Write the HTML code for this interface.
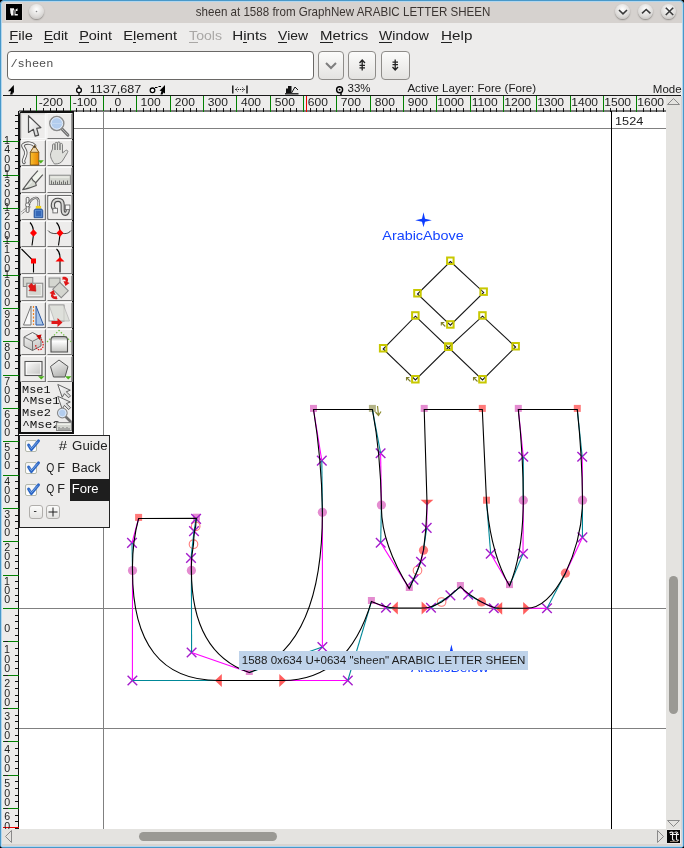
<!DOCTYPE html><html><head><meta charset="utf-8"><style>
*{margin:0;padding:0;box-sizing:border-box}
html,body{width:684px;height:848px;overflow:hidden;background:#edeceb;font-family:"Liberation Sans",sans-serif;color:#1e1e1e}
.a{position:absolute}
#frame{position:absolute;left:0;top:0;width:684px;height:848px;border:1.2px solid #4898c9;box-shadow:inset 0 0 0 1px #b2d7ef;border-radius:4px 4px 2px 2px}
#title{left:2px;top:2px;width:680px;height:21px;background:#d6d2cf}
.menu{top:27px;font-size:13px;line-height:16px;color:#202020}
.menu u{text-decoration:none;border-bottom:1px solid #202020}
.btn{border:1px solid #8e8c89;border-radius:4px;background:linear-gradient(#fbfbfa,#e4e3e1)}
.rl{font-size:10px;line-height:10px;color:#202020;position:absolute}
.wb{border-radius:50%;width:15px;height:15px;background:radial-gradient(circle at 50% 35%,#ffffff,#dcdad8 60%,#b8b6b3);box-shadow:0 1px 1.5px #8d8a87}
</style></head><body><div id="wrap" style="position:absolute;left:0;top:0;width:684px;height:848px;will-change:transform">
<div class="a" id="title"></div>
<div class="a" style="left:6px;top:4px;width:16px;height:16px;background:#000"></div>
<div class="a wb" style="left:29px;top:4px"></div>
<svg class="a" style="left:0;top:0;overflow:visible" width="684" height="848"><text x="195.81" y="15.80" font-size="12.69" textLength="294.62" lengthAdjust="spacingAndGlyphs" fill="#3a3431" font-family="'Liberation Sans',sans-serif" style="white-space:pre" >sheen at 1588 from GraphNew ARABIC LETTER SHEEN</text></svg>
<div class="a wb" style="left:615px;top:4px"></div>
<div class="a wb" style="left:638px;top:4px"></div>
<div class="a wb" style="left:661px;top:4px"></div>
<svg class="a" style="left:0;top:0;overflow:visible" width="684" height="848"><text x="9.22" y="39.60" font-size="12.41" textLength="23.68" lengthAdjust="spacingAndGlyphs" fill="#202020" font-family="'Liberation Sans',sans-serif" style="white-space:pre" >File</text></svg>
<div class="a" style="left:9.2px;top:41.5px;width:9.0px;height:1px;background:#202020"></div>
<svg class="a" style="left:0;top:0;overflow:visible" width="684" height="848"><text x="43.67" y="39.60" font-size="12.41" textLength="24.35" lengthAdjust="spacingAndGlyphs" fill="#202020" font-family="'Liberation Sans',sans-serif" style="white-space:pre" >Edit</text></svg>
<div class="a" style="left:43.7px;top:41.5px;width:9.4px;height:1px;background:#202020"></div>
<svg class="a" style="left:0;top:0;overflow:visible" width="684" height="848"><text x="79.15" y="39.60" font-size="12.41" textLength="32.89" lengthAdjust="spacingAndGlyphs" fill="#202020" font-family="'Liberation Sans',sans-serif" style="white-space:pre" >Point</text></svg>
<div class="a" style="left:79.1px;top:41.5px;width:9.6px;height:1px;background:#202020"></div>
<svg class="a" style="left:0;top:0;overflow:visible" width="684" height="848"><text x="123.22" y="39.60" font-size="12.41" textLength="53.90" lengthAdjust="spacingAndGlyphs" fill="#202020" font-family="'Liberation Sans',sans-serif" style="white-space:pre" >Element</text></svg>
<div class="a" style="left:133.0px;top:41.5px;width:3.3px;height:1px;background:#202020"></div>
<svg class="a" style="left:0;top:0;overflow:visible" width="684" height="848"><text x="189.12" y="39.60" font-size="12.41" textLength="32.87" lengthAdjust="spacingAndGlyphs" fill="#a9a7a5" font-family="'Liberation Sans',sans-serif" style="white-space:pre" >Tools</text></svg>
<div class="a" style="left:189.1px;top:41.5px;width:8.6px;height:1px;background:#a9a7a5"></div>
<svg class="a" style="left:0;top:0;overflow:visible" width="684" height="848"><text x="232.18" y="39.60" font-size="12.41" textLength="34.62" lengthAdjust="spacingAndGlyphs" fill="#202020" font-family="'Liberation Sans',sans-serif" style="white-space:pre" >Hints</text></svg>
<div class="a" style="left:243.2px;top:41.5px;width:3.4px;height:1px;background:#202020"></div>
<svg class="a" style="left:0;top:0;overflow:visible" width="684" height="848"><text x="278.13" y="39.60" font-size="12.41" textLength="29.86" lengthAdjust="spacingAndGlyphs" fill="#202020" font-family="'Liberation Sans',sans-serif" style="white-space:pre" >View</text></svg>
<div class="a" style="left:278.1px;top:41.5px;width:9.3px;height:1px;background:#202020"></div>
<svg class="a" style="left:0;top:0;overflow:visible" width="684" height="848"><text x="320.00" y="39.60" font-size="12.41" textLength="48.26" lengthAdjust="spacingAndGlyphs" fill="#202020" font-family="'Liberation Sans',sans-serif" style="white-space:pre" >Metrics</text></svg>
<div class="a" style="left:320.0px;top:41.5px;width:12.5px;height:1px;background:#202020"></div>
<svg class="a" style="left:0;top:0;overflow:visible" width="684" height="848"><text x="379.13" y="39.60" font-size="12.41" textLength="49.72" lengthAdjust="spacingAndGlyphs" fill="#202020" font-family="'Liberation Sans',sans-serif" style="white-space:pre" >Window</text></svg>
<div class="a" style="left:379.1px;top:41.5px;width:13.2px;height:1px;background:#202020"></div>
<svg class="a" style="left:0;top:0;overflow:visible" width="684" height="848"><text x="441.08" y="39.60" font-size="12.41" textLength="31.25" lengthAdjust="spacingAndGlyphs" fill="#202020" font-family="'Liberation Sans',sans-serif" style="white-space:pre" >Help</text></svg>
<div class="a" style="left:441.1px;top:41.5px;width:11.0px;height:1px;background:#202020"></div>
<div class="a" style="left:7px;top:51px;width:307px;height:29px;background:#fff;border:1px solid #6a6866;border-radius:4px"></div>
<svg class="a" style="left:0;top:0;overflow:visible" width="684" height="848"><text x="10.44" y="66.70" font-size="10.48" textLength="42.98" lengthAdjust="spacingAndGlyphs" fill="#505050" font-family="'Liberation Mono',monospace" style="white-space:pre" >/sheen</text></svg>
<div class="a btn" style="left:318px;top:51px;width:26px;height:29px"></div>
<div class="a btn" style="left:348px;top:51px;width:28px;height:29px"></div>
<div class="a btn" style="left:381px;top:51px;width:29px;height:29px"></div>
<svg class="a" style="left:0;top:0" width="684" height="848"><path d="M619 10 L623 13.8 L627 10" stroke="#3a3a3a" stroke-width="1.6" fill="none"/><path d="M642 13.3 L646.2 9.5 L650.4 13.3" stroke="#3a3a3a" stroke-width="1.6" fill="none"/><path d="M665.8 7.8 L673.2 15 M673.2 7.8 L665.8 15" stroke="#3a3a3a" stroke-width="1.6" fill="none"/><circle cx="36.5" cy="11.5" r="0.8" fill="#888"/><path d="M10 8.3 H14 V10 L13.5 10.5 V15.5 H11 V14 L10.5 13.5 Z M14.5 9.5 H15.5 V14 H17.8 V15.6 H14.5 Z M16 9.2 L17.5 8.3 V11 H16 Z" fill="#f4f4f4"/><rect x="5.5" y="3.5" width="17" height="17" fill="none" stroke="#e6e2de" stroke-width="0.6"/><path d="M326 63 L331 68 L336 63" stroke="#7e7e7e" stroke-width="2" fill="none"/><path d="M362.2 60 V70.5 M359.5 63 L362.2 60 L365 63 M359.5 65.3 H365 M359.5 67.8 H365" stroke="#222" stroke-width="1.3" fill="none"/><path d="M395.2 59.5 V70 M392.5 67 L395.2 70 L398 67 M392.5 62.2 H398 M392.5 64.7 H398" stroke="#222" stroke-width="1.3" fill="none"/><path d="M13.8 85 L8 91.3 L11 91.3 L10 94.5 L12.5 94.5 L13 92 L14 93.5 Z" fill="#000"/><path d="M79 85.5 V95" stroke="#000" stroke-width="1.2"/><circle cx="79" cy="90.2" r="2.4" fill="#fff" stroke="#000" stroke-width="1.3"/><path d="M78 85.2 L79.2 86.6" stroke="#000" stroke-width="1"/><circle cx="152.5" cy="90.3" r="2.3" fill="#fff" stroke="#000" stroke-width="1.3"/><path d="M155 87.5 H157.5 M158.5 86.5 H161" stroke="#000" stroke-width="1.1"/><path d="M165 85 L159.5 90.8 L161.5 91 L160.5 94.5 L162.5 94.5 L163.5 92.5 L165 93.5 Z" fill="#000"/><path d="M232.8 85.5 V93.5 M247 85.5 V93.5" stroke="#000" stroke-width="1.3"/><path d="M235.5 89.5 H244.5 M237.5 87.5 L235.5 89.5 L237.5 91.5 M242.5 87.5 L244.5 89.5 L242.5 91.5" stroke="#000" stroke-width="0.9" fill="none" stroke-dasharray="1.3 0.9"/><path d="M285 93.8 H298.5" stroke="#111" stroke-width="1.3"/><path d="M286 93 V88.5 H288 V86 H291.5 V93 Z" fill="#111"/><path d="M291.5 93 L295 87 L298 90" stroke="#111" stroke-width="1" fill="none"/><circle cx="339.6" cy="89.7" r="3" fill="none" stroke="#000" stroke-width="1.4"/><circle cx="339.6" cy="89.7" r="0.9" fill="#000"/><path d="M341 92.5 V96" stroke="#000" stroke-width="1.4"/></svg>
<svg class="a" style="left:0;top:0;overflow:visible" width="684" height="848"><text x="89.76" y="93.20" font-size="11.29" textLength="51.60" lengthAdjust="spacingAndGlyphs" fill="#202020" font-family="'Liberation Sans',sans-serif" style="white-space:pre" >1137,687</text></svg>
<svg class="a" style="left:0;top:0;overflow:visible" width="684" height="848"><text x="347.50" y="92.40" font-size="10.57" textLength="23.02" lengthAdjust="spacingAndGlyphs" fill="#202020" font-family="'Liberation Sans',sans-serif" style="white-space:pre" >33%</text></svg>
<svg class="a" style="left:0;top:0;overflow:visible" width="684" height="848"><text x="407.40" y="92.30" font-size="10.48" textLength="128.65" lengthAdjust="spacingAndGlyphs" fill="#202020" font-family="'Liberation Sans',sans-serif" style="white-space:pre" >Active Layer: Fore (Fore)</text></svg>
<svg class="a" style="left:0;top:0;overflow:visible" width="684" height="848"><text x="652.88" y="92.50" font-size="11.17" textLength="28.80" lengthAdjust="spacingAndGlyphs" fill="#202020" font-family="'Liberation Sans',sans-serif" style="white-space:pre" >Mode</text></svg>
<svg class="a" style="left:0;top:0" width="684" height="848" shape-rendering="crispEdges"><rect x="19" y="111" width="647" height="718" fill="#ffffff"/><rect x="2" y="96" width="664" height="15" fill="#edeceb"/><rect x="3" y="95" width="678" height="1.4" fill="#1a1a1a"/><rect x="19" y="110" width="647" height="1.6" fill="#7a7a7a"/><rect x="23" y="108" width="1.2" height="3.5" fill="#111"/><rect x="30" y="108" width="1.2" height="3.5" fill="#111"/><rect x="36" y="96" width="1.2" height="15.5" fill="#008000"/><rect x="43" y="108" width="1.2" height="3.5" fill="#111"/><rect x="50" y="108" width="1.2" height="3.5" fill="#111"/><rect x="56" y="108" width="1.2" height="3.5" fill="#111"/><rect x="63" y="108" width="1.2" height="3.5" fill="#111"/><rect x="70" y="96" width="1.2" height="15.5" fill="#008000"/><rect x="76" y="108" width="1.2" height="3.5" fill="#111"/><rect x="83" y="108" width="1.2" height="3.5" fill="#111"/><rect x="90" y="108" width="1.2" height="3.5" fill="#111"/><rect x="96" y="108" width="1.2" height="3.5" fill="#111"/><rect x="103" y="96" width="1.2" height="15.5" fill="#008000"/><rect x="110" y="108" width="1.2" height="3.5" fill="#111"/><rect x="116" y="108" width="1.2" height="3.5" fill="#111"/><rect x="123" y="108" width="1.2" height="3.5" fill="#111"/><rect x="130" y="108" width="1.2" height="3.5" fill="#111"/><rect x="136" y="96" width="1.2" height="15.5" fill="#008000"/><rect x="143" y="108" width="1.2" height="3.5" fill="#111"/><rect x="150" y="108" width="1.2" height="3.5" fill="#111"/><rect x="156" y="108" width="1.2" height="3.5" fill="#111"/><rect x="163" y="108" width="1.2" height="3.5" fill="#111"/><rect x="170" y="96" width="1.2" height="15.5" fill="#008000"/><rect x="176" y="108" width="1.2" height="3.5" fill="#111"/><rect x="183" y="108" width="1.2" height="3.5" fill="#111"/><rect x="190" y="108" width="1.2" height="3.5" fill="#111"/><rect x="196" y="108" width="1.2" height="3.5" fill="#111"/><rect x="203" y="96" width="1.2" height="15.5" fill="#008000"/><rect x="210" y="108" width="1.2" height="3.5" fill="#111"/><rect x="216" y="108" width="1.2" height="3.5" fill="#111"/><rect x="223" y="108" width="1.2" height="3.5" fill="#111"/><rect x="230" y="108" width="1.2" height="3.5" fill="#111"/><rect x="236" y="96" width="1.2" height="15.5" fill="#008000"/><rect x="243" y="108" width="1.2" height="3.5" fill="#111"/><rect x="250" y="108" width="1.2" height="3.5" fill="#111"/><rect x="256" y="108" width="1.2" height="3.5" fill="#111"/><rect x="263" y="108" width="1.2" height="3.5" fill="#111"/><rect x="270" y="96" width="1.2" height="15.5" fill="#008000"/><rect x="276" y="108" width="1.2" height="3.5" fill="#111"/><rect x="283" y="108" width="1.2" height="3.5" fill="#111"/><rect x="290" y="108" width="1.2" height="3.5" fill="#111"/><rect x="296" y="108" width="1.2" height="3.5" fill="#111"/><rect x="303" y="96" width="1.2" height="15.5" fill="#008000"/><rect x="310" y="108" width="1.2" height="3.5" fill="#111"/><rect x="316" y="108" width="1.2" height="3.5" fill="#111"/><rect x="323" y="108" width="1.2" height="3.5" fill="#111"/><rect x="330" y="108" width="1.2" height="3.5" fill="#111"/><rect x="336" y="96" width="1.2" height="15.5" fill="#008000"/><rect x="343" y="108" width="1.2" height="3.5" fill="#111"/><rect x="350" y="108" width="1.2" height="3.5" fill="#111"/><rect x="356" y="108" width="1.2" height="3.5" fill="#111"/><rect x="363" y="108" width="1.2" height="3.5" fill="#111"/><rect x="370" y="96" width="1.2" height="15.5" fill="#008000"/><rect x="376" y="108" width="1.2" height="3.5" fill="#111"/><rect x="383" y="108" width="1.2" height="3.5" fill="#111"/><rect x="390" y="108" width="1.2" height="3.5" fill="#111"/><rect x="396" y="108" width="1.2" height="3.5" fill="#111"/><rect x="403" y="96" width="1.2" height="15.5" fill="#008000"/><rect x="410" y="108" width="1.2" height="3.5" fill="#111"/><rect x="416" y="108" width="1.2" height="3.5" fill="#111"/><rect x="423" y="108" width="1.2" height="3.5" fill="#111"/><rect x="430" y="108" width="1.2" height="3.5" fill="#111"/><rect x="436" y="96" width="1.2" height="15.5" fill="#008000"/><rect x="443" y="108" width="1.2" height="3.5" fill="#111"/><rect x="450" y="108" width="1.2" height="3.5" fill="#111"/><rect x="456" y="108" width="1.2" height="3.5" fill="#111"/><rect x="463" y="108" width="1.2" height="3.5" fill="#111"/><rect x="470" y="96" width="1.2" height="15.5" fill="#008000"/><rect x="476" y="108" width="1.2" height="3.5" fill="#111"/><rect x="483" y="108" width="1.2" height="3.5" fill="#111"/><rect x="490" y="108" width="1.2" height="3.5" fill="#111"/><rect x="496" y="108" width="1.2" height="3.5" fill="#111"/><rect x="503" y="96" width="1.2" height="15.5" fill="#008000"/><rect x="510" y="108" width="1.2" height="3.5" fill="#111"/><rect x="516" y="108" width="1.2" height="3.5" fill="#111"/><rect x="523" y="108" width="1.2" height="3.5" fill="#111"/><rect x="530" y="108" width="1.2" height="3.5" fill="#111"/><rect x="536" y="96" width="1.2" height="15.5" fill="#008000"/><rect x="543" y="108" width="1.2" height="3.5" fill="#111"/><rect x="550" y="108" width="1.2" height="3.5" fill="#111"/><rect x="556" y="108" width="1.2" height="3.5" fill="#111"/><rect x="563" y="108" width="1.2" height="3.5" fill="#111"/><rect x="570" y="96" width="1.2" height="15.5" fill="#008000"/><rect x="576" y="108" width="1.2" height="3.5" fill="#111"/><rect x="583" y="108" width="1.2" height="3.5" fill="#111"/><rect x="590" y="108" width="1.2" height="3.5" fill="#111"/><rect x="596" y="108" width="1.2" height="3.5" fill="#111"/><rect x="603" y="96" width="1.2" height="15.5" fill="#008000"/><rect x="610" y="108" width="1.2" height="3.5" fill="#111"/><rect x="616" y="108" width="1.2" height="3.5" fill="#111"/><rect x="623" y="108" width="1.2" height="3.5" fill="#111"/><rect x="630" y="108" width="1.2" height="3.5" fill="#111"/><rect x="636" y="96" width="1.2" height="15.5" fill="#008000"/><rect x="643" y="108" width="1.2" height="3.5" fill="#111"/><rect x="650" y="108" width="1.2" height="3.5" fill="#111"/><rect x="656" y="108" width="1.2" height="3.5" fill="#111"/><rect x="663" y="108" width="1.2" height="3.5" fill="#111"/><rect x="306" y="96" width="1.2" height="15.5" fill="#f00000"/></svg>
<svg class="a" style="left:0;top:0;overflow:visible" width="684" height="848"><text x="38.80" y="105.70" font-size="10.34" textLength="24.10" lengthAdjust="spacingAndGlyphs" fill="#1e1e1e" font-family="'Liberation Sans',sans-serif" style="white-space:pre" >-200</text></svg>
<svg class="a" style="left:0;top:0;overflow:visible" width="684" height="848"><text x="72.80" y="105.70" font-size="10.34" textLength="24.10" lengthAdjust="spacingAndGlyphs" fill="#1e1e1e" font-family="'Liberation Sans',sans-serif" style="white-space:pre" >-100</text></svg>
<svg class="a" style="left:0;top:0;overflow:visible" width="684" height="848"><text x="114.53" y="105.70" font-size="10.34" textLength="6.70" lengthAdjust="spacingAndGlyphs" fill="#1e1e1e" font-family="'Liberation Sans',sans-serif" style="white-space:pre" >0</text></svg>
<svg class="a" style="left:0;top:0;overflow:visible" width="684" height="848"><text x="140.64" y="105.70" font-size="10.34" textLength="20.09" lengthAdjust="spacingAndGlyphs" fill="#1e1e1e" font-family="'Liberation Sans',sans-serif" style="white-space:pre" >100</text></svg>
<svg class="a" style="left:0;top:0;overflow:visible" width="684" height="848"><text x="174.79" y="105.70" font-size="10.34" textLength="20.09" lengthAdjust="spacingAndGlyphs" fill="#1e1e1e" font-family="'Liberation Sans',sans-serif" style="white-space:pre" >200</text></svg>
<svg class="a" style="left:0;top:0;overflow:visible" width="684" height="848"><text x="207.88" y="105.70" font-size="10.34" textLength="20.09" lengthAdjust="spacingAndGlyphs" fill="#1e1e1e" font-family="'Liberation Sans',sans-serif" style="white-space:pre" >300</text></svg>
<svg class="a" style="left:0;top:0;overflow:visible" width="684" height="848"><text x="240.97" y="105.70" font-size="10.34" textLength="20.09" lengthAdjust="spacingAndGlyphs" fill="#1e1e1e" font-family="'Liberation Sans',sans-serif" style="white-space:pre" >400</text></svg>
<svg class="a" style="left:0;top:0;overflow:visible" width="684" height="848"><text x="274.85" y="105.70" font-size="10.34" textLength="20.09" lengthAdjust="spacingAndGlyphs" fill="#1e1e1e" font-family="'Liberation Sans',sans-serif" style="white-space:pre" >500</text></svg>
<svg class="a" style="left:0;top:0;overflow:visible" width="684" height="848"><text x="307.79" y="105.70" font-size="10.34" textLength="20.09" lengthAdjust="spacingAndGlyphs" fill="#1e1e1e" font-family="'Liberation Sans',sans-serif" style="white-space:pre" >600</text></svg>
<svg class="a" style="left:0;top:0;overflow:visible" width="684" height="848"><text x="340.79" y="105.70" font-size="10.34" textLength="20.09" lengthAdjust="spacingAndGlyphs" fill="#1e1e1e" font-family="'Liberation Sans',sans-serif" style="white-space:pre" >700</text></svg>
<svg class="a" style="left:0;top:0;overflow:visible" width="684" height="848"><text x="374.85" y="105.70" font-size="10.34" textLength="20.09" lengthAdjust="spacingAndGlyphs" fill="#1e1e1e" font-family="'Liberation Sans',sans-serif" style="white-space:pre" >800</text></svg>
<svg class="a" style="left:0;top:0;overflow:visible" width="684" height="848"><text x="407.82" y="105.70" font-size="10.34" textLength="20.09" lengthAdjust="spacingAndGlyphs" fill="#1e1e1e" font-family="'Liberation Sans',sans-serif" style="white-space:pre" >900</text></svg>
<svg class="a" style="left:0;top:0;overflow:visible" width="684" height="848"><text x="437.26" y="105.70" font-size="10.34" textLength="26.79" lengthAdjust="spacingAndGlyphs" fill="#1e1e1e" font-family="'Liberation Sans',sans-serif" style="white-space:pre" >1000</text></svg>
<svg class="a" style="left:0;top:0;overflow:visible" width="684" height="848"><text x="471.72" y="105.70" font-size="10.34" textLength="25.89" lengthAdjust="spacingAndGlyphs" fill="#1e1e1e" font-family="'Liberation Sans',sans-serif" style="white-space:pre" >1100</text></svg>
<svg class="a" style="left:0;top:0;overflow:visible" width="684" height="848"><text x="504.26" y="105.70" font-size="10.34" textLength="26.79" lengthAdjust="spacingAndGlyphs" fill="#1e1e1e" font-family="'Liberation Sans',sans-serif" style="white-space:pre" >1200</text></svg>
<svg class="a" style="left:0;top:0;overflow:visible" width="684" height="848"><text x="537.26" y="105.70" font-size="10.34" textLength="26.79" lengthAdjust="spacingAndGlyphs" fill="#1e1e1e" font-family="'Liberation Sans',sans-serif" style="white-space:pre" >1300</text></svg>
<svg class="a" style="left:0;top:0;overflow:visible" width="684" height="848"><text x="571.26" y="105.70" font-size="10.34" textLength="26.79" lengthAdjust="spacingAndGlyphs" fill="#1e1e1e" font-family="'Liberation Sans',sans-serif" style="white-space:pre" >1400</text></svg>
<svg class="a" style="left:0;top:0;overflow:visible" width="684" height="848"><text x="604.26" y="105.70" font-size="10.34" textLength="26.79" lengthAdjust="spacingAndGlyphs" fill="#1e1e1e" font-family="'Liberation Sans',sans-serif" style="white-space:pre" >1500</text></svg>
<svg class="a" style="left:0;top:0;overflow:visible" width="684" height="848"><text x="637.26" y="105.70" font-size="10.34" textLength="26.79" lengthAdjust="spacingAndGlyphs" fill="#1e1e1e" font-family="'Liberation Sans',sans-serif" style="white-space:pre" >1600</text></svg>
<div class="a" style="left:2px;top:111px;width:17.4px;height:718px;background:#edeceb;border-right:1.3px solid #111"></div>
<svg class="a" style="left:0;top:0" width="684" height="848" shape-rendering="crispEdges"><rect x="15" y="828" width="3.5" height="1.2" fill="#111"/><rect x="15" y="821" width="3.5" height="1.2" fill="#111"/><rect x="15" y="815" width="3.5" height="1.2" fill="#111"/><rect x="3" y="808" width="16" height="1.2" fill="#008000"/><rect x="15" y="801" width="3.5" height="1.2" fill="#111"/><rect x="15" y="795" width="3.5" height="1.2" fill="#111"/><rect x="15" y="788" width="3.5" height="1.2" fill="#111"/><rect x="15" y="781" width="3.5" height="1.2" fill="#111"/><rect x="3" y="775" width="16" height="1.2" fill="#008000"/><rect x="15" y="768" width="3.5" height="1.2" fill="#111"/><rect x="15" y="761" width="3.5" height="1.2" fill="#111"/><rect x="15" y="755" width="3.5" height="1.2" fill="#111"/><rect x="15" y="748" width="3.5" height="1.2" fill="#111"/><rect x="3" y="741" width="16" height="1.2" fill="#008000"/><rect x="15" y="735" width="3.5" height="1.2" fill="#111"/><rect x="15" y="728" width="3.5" height="1.2" fill="#111"/><rect x="15" y="721" width="3.5" height="1.2" fill="#111"/><rect x="15" y="715" width="3.5" height="1.2" fill="#111"/><rect x="3" y="708" width="16" height="1.2" fill="#008000"/><rect x="15" y="701" width="3.5" height="1.2" fill="#111"/><rect x="15" y="695" width="3.5" height="1.2" fill="#111"/><rect x="15" y="688" width="3.5" height="1.2" fill="#111"/><rect x="15" y="681" width="3.5" height="1.2" fill="#111"/><rect x="3" y="675" width="16" height="1.2" fill="#008000"/><rect x="15" y="668" width="3.5" height="1.2" fill="#111"/><rect x="15" y="661" width="3.5" height="1.2" fill="#111"/><rect x="15" y="655" width="3.5" height="1.2" fill="#111"/><rect x="15" y="648" width="3.5" height="1.2" fill="#111"/><rect x="3" y="641" width="16" height="1.2" fill="#008000"/><rect x="15" y="635" width="3.5" height="1.2" fill="#111"/><rect x="15" y="628" width="3.5" height="1.2" fill="#111"/><rect x="15" y="621" width="3.5" height="1.2" fill="#111"/><rect x="15" y="615" width="3.5" height="1.2" fill="#111"/><rect x="3" y="608" width="16" height="1.2" fill="#008000"/><rect x="15" y="601" width="3.5" height="1.2" fill="#111"/><rect x="15" y="595" width="3.5" height="1.2" fill="#111"/><rect x="15" y="588" width="3.5" height="1.2" fill="#111"/><rect x="15" y="581" width="3.5" height="1.2" fill="#111"/><rect x="3" y="575" width="16" height="1.2" fill="#008000"/><rect x="15" y="568" width="3.5" height="1.2" fill="#111"/><rect x="15" y="561" width="3.5" height="1.2" fill="#111"/><rect x="15" y="555" width="3.5" height="1.2" fill="#111"/><rect x="15" y="548" width="3.5" height="1.2" fill="#111"/><rect x="3" y="541" width="16" height="1.2" fill="#008000"/><rect x="15" y="535" width="3.5" height="1.2" fill="#111"/><rect x="15" y="528" width="3.5" height="1.2" fill="#111"/><rect x="15" y="521" width="3.5" height="1.2" fill="#111"/><rect x="15" y="515" width="3.5" height="1.2" fill="#111"/><rect x="3" y="508" width="16" height="1.2" fill="#008000"/><rect x="15" y="501" width="3.5" height="1.2" fill="#111"/><rect x="15" y="495" width="3.5" height="1.2" fill="#111"/><rect x="15" y="488" width="3.5" height="1.2" fill="#111"/><rect x="15" y="481" width="3.5" height="1.2" fill="#111"/><rect x="3" y="475" width="16" height="1.2" fill="#008000"/><rect x="15" y="468" width="3.5" height="1.2" fill="#111"/><rect x="15" y="461" width="3.5" height="1.2" fill="#111"/><rect x="15" y="455" width="3.5" height="1.2" fill="#111"/><rect x="15" y="448" width="3.5" height="1.2" fill="#111"/><rect x="3" y="441" width="16" height="1.2" fill="#008000"/><rect x="15" y="435" width="3.5" height="1.2" fill="#111"/><rect x="15" y="428" width="3.5" height="1.2" fill="#111"/><rect x="15" y="421" width="3.5" height="1.2" fill="#111"/><rect x="15" y="415" width="3.5" height="1.2" fill="#111"/><rect x="3" y="408" width="16" height="1.2" fill="#008000"/><rect x="15" y="401" width="3.5" height="1.2" fill="#111"/><rect x="15" y="395" width="3.5" height="1.2" fill="#111"/><rect x="15" y="388" width="3.5" height="1.2" fill="#111"/><rect x="15" y="381" width="3.5" height="1.2" fill="#111"/><rect x="3" y="375" width="16" height="1.2" fill="#008000"/><rect x="15" y="368" width="3.5" height="1.2" fill="#111"/><rect x="15" y="361" width="3.5" height="1.2" fill="#111"/><rect x="15" y="355" width="3.5" height="1.2" fill="#111"/><rect x="15" y="348" width="3.5" height="1.2" fill="#111"/><rect x="3" y="341" width="16" height="1.2" fill="#008000"/><rect x="15" y="335" width="3.5" height="1.2" fill="#111"/><rect x="15" y="328" width="3.5" height="1.2" fill="#111"/><rect x="15" y="321" width="3.5" height="1.2" fill="#111"/><rect x="15" y="315" width="3.5" height="1.2" fill="#111"/><rect x="3" y="308" width="16" height="1.2" fill="#008000"/><rect x="15" y="301" width="3.5" height="1.2" fill="#111"/><rect x="15" y="295" width="3.5" height="1.2" fill="#111"/><rect x="15" y="288" width="3.5" height="1.2" fill="#111"/><rect x="15" y="281" width="3.5" height="1.2" fill="#111"/><rect x="3" y="275" width="16" height="1.2" fill="#008000"/><rect x="15" y="268" width="3.5" height="1.2" fill="#111"/><rect x="15" y="261" width="3.5" height="1.2" fill="#111"/><rect x="15" y="255" width="3.5" height="1.2" fill="#111"/><rect x="15" y="248" width="3.5" height="1.2" fill="#111"/><rect x="3" y="241" width="16" height="1.2" fill="#008000"/><rect x="15" y="235" width="3.5" height="1.2" fill="#111"/><rect x="15" y="228" width="3.5" height="1.2" fill="#111"/><rect x="15" y="221" width="3.5" height="1.2" fill="#111"/><rect x="15" y="215" width="3.5" height="1.2" fill="#111"/><rect x="3" y="208" width="16" height="1.2" fill="#008000"/><rect x="15" y="201" width="3.5" height="1.2" fill="#111"/><rect x="15" y="195" width="3.5" height="1.2" fill="#111"/><rect x="15" y="188" width="3.5" height="1.2" fill="#111"/><rect x="15" y="181" width="3.5" height="1.2" fill="#111"/><rect x="3" y="175" width="16" height="1.2" fill="#008000"/><rect x="15" y="168" width="3.5" height="1.2" fill="#111"/><rect x="15" y="161" width="3.5" height="1.2" fill="#111"/><rect x="15" y="155" width="3.5" height="1.2" fill="#111"/><rect x="15" y="148" width="3.5" height="1.2" fill="#111"/><rect x="3" y="141" width="16" height="1.2" fill="#008000"/><rect x="15" y="135" width="3.5" height="1.2" fill="#111"/><rect x="15" y="128" width="3.5" height="1.2" fill="#111"/><rect x="15" y="121" width="3.5" height="1.2" fill="#111"/><rect x="15" y="115" width="3.5" height="1.2" fill="#111"/><rect x="3" y="827" width="16" height="1.2" fill="#f00000"/></svg>
<div class="a" style="left:0;top:111px;width:19px;height:718px;overflow:hidden"><div class="a" style="left:3.5px;top:696.5px;width:4.8px;height:1.3px;background:#1e1e1e"></div><svg class="a" style="left:0;top:-111px;overflow:visible" width="684" height="848"><text x="4.19" y="820.40" font-size="10.57" textLength="5.92" lengthAdjust="spacingAndGlyphs" fill="#1e1e1e" font-family="'Liberation Sans',sans-serif" style="white-space:pre" >6</text></svg><svg class="a" style="left:0;top:-111px;overflow:visible" width="684" height="848"><text x="4.22" y="829.50" font-size="10.57" textLength="5.92" lengthAdjust="spacingAndGlyphs" fill="#1e1e1e" font-family="'Liberation Sans',sans-serif" style="white-space:pre" >0</text></svg><div class="a" style="left:3.5px;top:663.5px;width:4.8px;height:1.3px;background:#1e1e1e"></div><svg class="a" style="left:0;top:-111px;overflow:visible" width="684" height="848"><text x="4.25" y="787.40" font-size="10.72" textLength="5.92" lengthAdjust="spacingAndGlyphs" fill="#1e1e1e" font-family="'Liberation Sans',sans-serif" style="white-space:pre" >5</text></svg><svg class="a" style="left:0;top:-111px;overflow:visible" width="684" height="848"><text x="4.22" y="796.50" font-size="10.57" textLength="5.92" lengthAdjust="spacingAndGlyphs" fill="#1e1e1e" font-family="'Liberation Sans',sans-serif" style="white-space:pre" >0</text></svg><svg class="a" style="left:0;top:-111px;overflow:visible" width="684" height="848"><text x="4.22" y="805.60" font-size="10.57" textLength="5.92" lengthAdjust="spacingAndGlyphs" fill="#1e1e1e" font-family="'Liberation Sans',sans-serif" style="white-space:pre" >0</text></svg><div class="a" style="left:3.5px;top:629.5px;width:4.8px;height:1.3px;background:#1e1e1e"></div><svg class="a" style="left:0;top:-111px;overflow:visible" width="684" height="848"><text x="4.27" y="753.40" font-size="10.72" textLength="5.92" lengthAdjust="spacingAndGlyphs" fill="#1e1e1e" font-family="'Liberation Sans',sans-serif" style="white-space:pre" >4</text></svg><svg class="a" style="left:0;top:-111px;overflow:visible" width="684" height="848"><text x="4.22" y="762.50" font-size="10.57" textLength="5.92" lengthAdjust="spacingAndGlyphs" fill="#1e1e1e" font-family="'Liberation Sans',sans-serif" style="white-space:pre" >0</text></svg><svg class="a" style="left:0;top:-111px;overflow:visible" width="684" height="848"><text x="4.22" y="771.60" font-size="10.57" textLength="5.92" lengthAdjust="spacingAndGlyphs" fill="#1e1e1e" font-family="'Liberation Sans',sans-serif" style="white-space:pre" >0</text></svg><div class="a" style="left:3.5px;top:596.5px;width:4.8px;height:1.3px;background:#1e1e1e"></div><svg class="a" style="left:0;top:-111px;overflow:visible" width="684" height="848"><text x="4.27" y="720.40" font-size="10.57" textLength="5.92" lengthAdjust="spacingAndGlyphs" fill="#1e1e1e" font-family="'Liberation Sans',sans-serif" style="white-space:pre" >3</text></svg><svg class="a" style="left:0;top:-111px;overflow:visible" width="684" height="848"><text x="4.22" y="729.50" font-size="10.57" textLength="5.92" lengthAdjust="spacingAndGlyphs" fill="#1e1e1e" font-family="'Liberation Sans',sans-serif" style="white-space:pre" >0</text></svg><svg class="a" style="left:0;top:-111px;overflow:visible" width="684" height="848"><text x="4.22" y="738.60" font-size="10.57" textLength="5.92" lengthAdjust="spacingAndGlyphs" fill="#1e1e1e" font-family="'Liberation Sans',sans-serif" style="white-space:pre" >0</text></svg><div class="a" style="left:3.5px;top:563.5px;width:4.8px;height:1.3px;background:#1e1e1e"></div><svg class="a" style="left:0;top:-111px;overflow:visible" width="684" height="848"><text x="4.25" y="687.40" font-size="10.57" textLength="5.92" lengthAdjust="spacingAndGlyphs" fill="#1e1e1e" font-family="'Liberation Sans',sans-serif" style="white-space:pre" >2</text></svg><svg class="a" style="left:0;top:-111px;overflow:visible" width="684" height="848"><text x="4.22" y="696.50" font-size="10.57" textLength="5.92" lengthAdjust="spacingAndGlyphs" fill="#1e1e1e" font-family="'Liberation Sans',sans-serif" style="white-space:pre" >0</text></svg><svg class="a" style="left:0;top:-111px;overflow:visible" width="684" height="848"><text x="4.22" y="705.60" font-size="10.57" textLength="5.92" lengthAdjust="spacingAndGlyphs" fill="#1e1e1e" font-family="'Liberation Sans',sans-serif" style="white-space:pre" >0</text></svg><div class="a" style="left:3.5px;top:529.5px;width:4.8px;height:1.3px;background:#1e1e1e"></div><svg class="a" style="left:0;top:-111px;overflow:visible" width="684" height="848"><text x="4.09" y="653.40" font-size="10.72" textLength="5.92" lengthAdjust="spacingAndGlyphs" fill="#1e1e1e" font-family="'Liberation Sans',sans-serif" style="white-space:pre" >1</text></svg><svg class="a" style="left:0;top:-111px;overflow:visible" width="684" height="848"><text x="4.22" y="662.50" font-size="10.57" textLength="5.92" lengthAdjust="spacingAndGlyphs" fill="#1e1e1e" font-family="'Liberation Sans',sans-serif" style="white-space:pre" >0</text></svg><svg class="a" style="left:0;top:-111px;overflow:visible" width="684" height="848"><text x="4.22" y="671.60" font-size="10.57" textLength="5.92" lengthAdjust="spacingAndGlyphs" fill="#1e1e1e" font-family="'Liberation Sans',sans-serif" style="white-space:pre" >0</text></svg><svg class="a" style="left:0;top:-111px;overflow:visible" width="684" height="848"><text x="4.22" y="631.70" font-size="10.57" textLength="5.92" lengthAdjust="spacingAndGlyphs" fill="#1e1e1e" font-family="'Liberation Sans',sans-serif" style="white-space:pre" >0</text></svg><svg class="a" style="left:0;top:-111px;overflow:visible" width="684" height="848"><text x="4.09" y="585.10" font-size="10.72" textLength="5.92" lengthAdjust="spacingAndGlyphs" fill="#1e1e1e" font-family="'Liberation Sans',sans-serif" style="white-space:pre" >1</text></svg><svg class="a" style="left:0;top:-111px;overflow:visible" width="684" height="848"><text x="4.22" y="594.20" font-size="10.57" textLength="5.92" lengthAdjust="spacingAndGlyphs" fill="#1e1e1e" font-family="'Liberation Sans',sans-serif" style="white-space:pre" >0</text></svg><svg class="a" style="left:0;top:-111px;overflow:visible" width="684" height="848"><text x="4.22" y="603.30" font-size="10.57" textLength="5.92" lengthAdjust="spacingAndGlyphs" fill="#1e1e1e" font-family="'Liberation Sans',sans-serif" style="white-space:pre" >0</text></svg><svg class="a" style="left:0;top:-111px;overflow:visible" width="684" height="848"><text x="4.25" y="551.10" font-size="10.57" textLength="5.92" lengthAdjust="spacingAndGlyphs" fill="#1e1e1e" font-family="'Liberation Sans',sans-serif" style="white-space:pre" >2</text></svg><svg class="a" style="left:0;top:-111px;overflow:visible" width="684" height="848"><text x="4.22" y="560.20" font-size="10.57" textLength="5.92" lengthAdjust="spacingAndGlyphs" fill="#1e1e1e" font-family="'Liberation Sans',sans-serif" style="white-space:pre" >0</text></svg><svg class="a" style="left:0;top:-111px;overflow:visible" width="684" height="848"><text x="4.22" y="569.30" font-size="10.57" textLength="5.92" lengthAdjust="spacingAndGlyphs" fill="#1e1e1e" font-family="'Liberation Sans',sans-serif" style="white-space:pre" >0</text></svg><svg class="a" style="left:0;top:-111px;overflow:visible" width="684" height="848"><text x="4.27" y="518.10" font-size="10.57" textLength="5.92" lengthAdjust="spacingAndGlyphs" fill="#1e1e1e" font-family="'Liberation Sans',sans-serif" style="white-space:pre" >3</text></svg><svg class="a" style="left:0;top:-111px;overflow:visible" width="684" height="848"><text x="4.22" y="527.20" font-size="10.57" textLength="5.92" lengthAdjust="spacingAndGlyphs" fill="#1e1e1e" font-family="'Liberation Sans',sans-serif" style="white-space:pre" >0</text></svg><svg class="a" style="left:0;top:-111px;overflow:visible" width="684" height="848"><text x="4.22" y="536.30" font-size="10.57" textLength="5.92" lengthAdjust="spacingAndGlyphs" fill="#1e1e1e" font-family="'Liberation Sans',sans-serif" style="white-space:pre" >0</text></svg><svg class="a" style="left:0;top:-111px;overflow:visible" width="684" height="848"><text x="4.27" y="485.10" font-size="10.72" textLength="5.92" lengthAdjust="spacingAndGlyphs" fill="#1e1e1e" font-family="'Liberation Sans',sans-serif" style="white-space:pre" >4</text></svg><svg class="a" style="left:0;top:-111px;overflow:visible" width="684" height="848"><text x="4.22" y="494.20" font-size="10.57" textLength="5.92" lengthAdjust="spacingAndGlyphs" fill="#1e1e1e" font-family="'Liberation Sans',sans-serif" style="white-space:pre" >0</text></svg><svg class="a" style="left:0;top:-111px;overflow:visible" width="684" height="848"><text x="4.22" y="503.30" font-size="10.57" textLength="5.92" lengthAdjust="spacingAndGlyphs" fill="#1e1e1e" font-family="'Liberation Sans',sans-serif" style="white-space:pre" >0</text></svg><svg class="a" style="left:0;top:-111px;overflow:visible" width="684" height="848"><text x="4.25" y="451.10" font-size="10.72" textLength="5.92" lengthAdjust="spacingAndGlyphs" fill="#1e1e1e" font-family="'Liberation Sans',sans-serif" style="white-space:pre" >5</text></svg><svg class="a" style="left:0;top:-111px;overflow:visible" width="684" height="848"><text x="4.22" y="460.20" font-size="10.57" textLength="5.92" lengthAdjust="spacingAndGlyphs" fill="#1e1e1e" font-family="'Liberation Sans',sans-serif" style="white-space:pre" >0</text></svg><svg class="a" style="left:0;top:-111px;overflow:visible" width="684" height="848"><text x="4.22" y="469.30" font-size="10.57" textLength="5.92" lengthAdjust="spacingAndGlyphs" fill="#1e1e1e" font-family="'Liberation Sans',sans-serif" style="white-space:pre" >0</text></svg><svg class="a" style="left:0;top:-111px;overflow:visible" width="684" height="848"><text x="4.19" y="418.10" font-size="10.57" textLength="5.92" lengthAdjust="spacingAndGlyphs" fill="#1e1e1e" font-family="'Liberation Sans',sans-serif" style="white-space:pre" >6</text></svg><svg class="a" style="left:0;top:-111px;overflow:visible" width="684" height="848"><text x="4.22" y="427.20" font-size="10.57" textLength="5.92" lengthAdjust="spacingAndGlyphs" fill="#1e1e1e" font-family="'Liberation Sans',sans-serif" style="white-space:pre" >0</text></svg><svg class="a" style="left:0;top:-111px;overflow:visible" width="684" height="848"><text x="4.22" y="436.30" font-size="10.57" textLength="5.92" lengthAdjust="spacingAndGlyphs" fill="#1e1e1e" font-family="'Liberation Sans',sans-serif" style="white-space:pre" >0</text></svg><svg class="a" style="left:0;top:-111px;overflow:visible" width="684" height="848"><text x="4.25" y="385.10" font-size="10.72" textLength="5.92" lengthAdjust="spacingAndGlyphs" fill="#1e1e1e" font-family="'Liberation Sans',sans-serif" style="white-space:pre" >7</text></svg><svg class="a" style="left:0;top:-111px;overflow:visible" width="684" height="848"><text x="4.22" y="394.20" font-size="10.57" textLength="5.92" lengthAdjust="spacingAndGlyphs" fill="#1e1e1e" font-family="'Liberation Sans',sans-serif" style="white-space:pre" >0</text></svg><svg class="a" style="left:0;top:-111px;overflow:visible" width="684" height="848"><text x="4.22" y="403.30" font-size="10.57" textLength="5.92" lengthAdjust="spacingAndGlyphs" fill="#1e1e1e" font-family="'Liberation Sans',sans-serif" style="white-space:pre" >0</text></svg><svg class="a" style="left:0;top:-111px;overflow:visible" width="684" height="848"><text x="4.25" y="351.10" font-size="10.57" textLength="5.92" lengthAdjust="spacingAndGlyphs" fill="#1e1e1e" font-family="'Liberation Sans',sans-serif" style="white-space:pre" >8</text></svg><svg class="a" style="left:0;top:-111px;overflow:visible" width="684" height="848"><text x="4.22" y="360.20" font-size="10.57" textLength="5.92" lengthAdjust="spacingAndGlyphs" fill="#1e1e1e" font-family="'Liberation Sans',sans-serif" style="white-space:pre" >0</text></svg><svg class="a" style="left:0;top:-111px;overflow:visible" width="684" height="848"><text x="4.22" y="369.30" font-size="10.57" textLength="5.92" lengthAdjust="spacingAndGlyphs" fill="#1e1e1e" font-family="'Liberation Sans',sans-serif" style="white-space:pre" >0</text></svg><svg class="a" style="left:0;top:-111px;overflow:visible" width="684" height="848"><text x="4.25" y="318.10" font-size="10.57" textLength="5.92" lengthAdjust="spacingAndGlyphs" fill="#1e1e1e" font-family="'Liberation Sans',sans-serif" style="white-space:pre" >9</text></svg><svg class="a" style="left:0;top:-111px;overflow:visible" width="684" height="848"><text x="4.22" y="327.20" font-size="10.57" textLength="5.92" lengthAdjust="spacingAndGlyphs" fill="#1e1e1e" font-family="'Liberation Sans',sans-serif" style="white-space:pre" >0</text></svg><svg class="a" style="left:0;top:-111px;overflow:visible" width="684" height="848"><text x="4.22" y="336.30" font-size="10.57" textLength="5.92" lengthAdjust="spacingAndGlyphs" fill="#1e1e1e" font-family="'Liberation Sans',sans-serif" style="white-space:pre" >0</text></svg><svg class="a" style="left:0;top:-111px;overflow:visible" width="684" height="848"><text x="4.09" y="278.30" font-size="10.72" textLength="5.92" lengthAdjust="spacingAndGlyphs" fill="#1e1e1e" font-family="'Liberation Sans',sans-serif" style="white-space:pre" >1</text></svg><svg class="a" style="left:0;top:-111px;overflow:visible" width="684" height="848"><text x="4.22" y="287.40" font-size="10.57" textLength="5.92" lengthAdjust="spacingAndGlyphs" fill="#1e1e1e" font-family="'Liberation Sans',sans-serif" style="white-space:pre" >0</text></svg><svg class="a" style="left:0;top:-111px;overflow:visible" width="684" height="848"><text x="4.22" y="296.50" font-size="10.57" textLength="5.92" lengthAdjust="spacingAndGlyphs" fill="#1e1e1e" font-family="'Liberation Sans',sans-serif" style="white-space:pre" >0</text></svg><svg class="a" style="left:0;top:-111px;overflow:visible" width="684" height="848"><text x="4.22" y="305.60" font-size="10.57" textLength="5.92" lengthAdjust="spacingAndGlyphs" fill="#1e1e1e" font-family="'Liberation Sans',sans-serif" style="white-space:pre" >0</text></svg><svg class="a" style="left:0;top:-111px;overflow:visible" width="684" height="848"><text x="4.09" y="244.30" font-size="10.72" textLength="5.92" lengthAdjust="spacingAndGlyphs" fill="#1e1e1e" font-family="'Liberation Sans',sans-serif" style="white-space:pre" >1</text></svg><svg class="a" style="left:0;top:-111px;overflow:visible" width="684" height="848"><text x="4.09" y="253.40" font-size="10.72" textLength="5.92" lengthAdjust="spacingAndGlyphs" fill="#1e1e1e" font-family="'Liberation Sans',sans-serif" style="white-space:pre" >1</text></svg><svg class="a" style="left:0;top:-111px;overflow:visible" width="684" height="848"><text x="4.22" y="262.50" font-size="10.57" textLength="5.92" lengthAdjust="spacingAndGlyphs" fill="#1e1e1e" font-family="'Liberation Sans',sans-serif" style="white-space:pre" >0</text></svg><svg class="a" style="left:0;top:-111px;overflow:visible" width="684" height="848"><text x="4.22" y="271.60" font-size="10.57" textLength="5.92" lengthAdjust="spacingAndGlyphs" fill="#1e1e1e" font-family="'Liberation Sans',sans-serif" style="white-space:pre" >0</text></svg><svg class="a" style="left:0;top:-111px;overflow:visible" width="684" height="848"><text x="4.09" y="211.30" font-size="10.72" textLength="5.92" lengthAdjust="spacingAndGlyphs" fill="#1e1e1e" font-family="'Liberation Sans',sans-serif" style="white-space:pre" >1</text></svg><svg class="a" style="left:0;top:-111px;overflow:visible" width="684" height="848"><text x="4.25" y="220.40" font-size="10.57" textLength="5.92" lengthAdjust="spacingAndGlyphs" fill="#1e1e1e" font-family="'Liberation Sans',sans-serif" style="white-space:pre" >2</text></svg><svg class="a" style="left:0;top:-111px;overflow:visible" width="684" height="848"><text x="4.22" y="229.50" font-size="10.57" textLength="5.92" lengthAdjust="spacingAndGlyphs" fill="#1e1e1e" font-family="'Liberation Sans',sans-serif" style="white-space:pre" >0</text></svg><svg class="a" style="left:0;top:-111px;overflow:visible" width="684" height="848"><text x="4.22" y="238.60" font-size="10.57" textLength="5.92" lengthAdjust="spacingAndGlyphs" fill="#1e1e1e" font-family="'Liberation Sans',sans-serif" style="white-space:pre" >0</text></svg><svg class="a" style="left:0;top:-111px;overflow:visible" width="684" height="848"><text x="4.09" y="178.30" font-size="10.72" textLength="5.92" lengthAdjust="spacingAndGlyphs" fill="#1e1e1e" font-family="'Liberation Sans',sans-serif" style="white-space:pre" >1</text></svg><svg class="a" style="left:0;top:-111px;overflow:visible" width="684" height="848"><text x="4.27" y="187.40" font-size="10.57" textLength="5.92" lengthAdjust="spacingAndGlyphs" fill="#1e1e1e" font-family="'Liberation Sans',sans-serif" style="white-space:pre" >3</text></svg><svg class="a" style="left:0;top:-111px;overflow:visible" width="684" height="848"><text x="4.22" y="196.50" font-size="10.57" textLength="5.92" lengthAdjust="spacingAndGlyphs" fill="#1e1e1e" font-family="'Liberation Sans',sans-serif" style="white-space:pre" >0</text></svg><svg class="a" style="left:0;top:-111px;overflow:visible" width="684" height="848"><text x="4.22" y="205.60" font-size="10.57" textLength="5.92" lengthAdjust="spacingAndGlyphs" fill="#1e1e1e" font-family="'Liberation Sans',sans-serif" style="white-space:pre" >0</text></svg><svg class="a" style="left:0;top:-111px;overflow:visible" width="684" height="848"><text x="4.09" y="144.30" font-size="10.72" textLength="5.92" lengthAdjust="spacingAndGlyphs" fill="#1e1e1e" font-family="'Liberation Sans',sans-serif" style="white-space:pre" >1</text></svg><svg class="a" style="left:0;top:-111px;overflow:visible" width="684" height="848"><text x="4.27" y="153.40" font-size="10.72" textLength="5.92" lengthAdjust="spacingAndGlyphs" fill="#1e1e1e" font-family="'Liberation Sans',sans-serif" style="white-space:pre" >4</text></svg><svg class="a" style="left:0;top:-111px;overflow:visible" width="684" height="848"><text x="4.22" y="162.50" font-size="10.57" textLength="5.92" lengthAdjust="spacingAndGlyphs" fill="#1e1e1e" font-family="'Liberation Sans',sans-serif" style="white-space:pre" >0</text></svg><svg class="a" style="left:0;top:-111px;overflow:visible" width="684" height="848"><text x="4.22" y="171.60" font-size="10.57" textLength="5.92" lengthAdjust="spacingAndGlyphs" fill="#1e1e1e" font-family="'Liberation Sans',sans-serif" style="white-space:pre" >0</text></svg></div>
<svg class="a" style="left:0;top:0" width="684" height="848" shape-rendering="crispEdges"><rect x="103" y="111" width="1" height="718" fill="#808080"/><rect x="19" y="128" width="647" height="1" fill="#808080"/><rect x="19" y="608" width="647" height="1" fill="#808080"/><rect x="19" y="728" width="647" height="1" fill="#808080"/><rect x="611" y="111" width="1.2" height="718" fill="#000"/></svg>
<svg class="a" style="left:0;top:0;overflow:visible" width="684" height="848"><text x="615.05" y="125.00" font-size="11.71" textLength="28.27" lengthAdjust="spacingAndGlyphs" fill="#202020" font-family="'Liberation Sans',sans-serif" style="white-space:pre" >1524</text></svg>
<svg class="a" style="left:0;top:0" width="684" height="848"><rect x="135.1" y="513.9" width="7" height="7" fill="#ff7a7a"/><rect x="478.8" y="404.9" width="7" height="7" fill="#ff7a7a"/><rect x="573.8" y="404.9" width="7" height="7" fill="#ff7a7a"/><rect x="483.0" y="496.7" width="7" height="7" fill="#ff7a7a"/><rect x="193.0" y="513.7" width="7" height="7" fill="#e48cd0"/><rect x="310.0" y="404.9" width="7" height="7" fill="#e48cd0"/><rect x="420.7" y="404.9" width="7" height="7" fill="#e48cd0"/><rect x="514.8" y="404.9" width="7" height="7" fill="#e48cd0"/><rect x="405.8" y="584.0" width="7" height="7" fill="#e48cd0"/><rect x="506.0" y="581.1" width="7" height="7" fill="#e48cd0"/><rect x="367.9" y="597.0" width="7" height="7" fill="#e48cd0"/><rect x="456.9" y="582.0" width="7" height="7" fill="#e48cd0"/><rect x="245.8" y="668.0" width="7" height="7" fill="#e48cd0"/><rect x="368.9" y="404.9" width="7" height="7" fill="#b4b488"/><path d="M377.5 406 L378.5 415 M375.5 412 L378.5 415.5 L381 411.5" stroke="#8c8c30" stroke-width="1.2" fill="none"/><circle cx="132.5" cy="570.5" r="4.6" fill="#e48cd0"/><circle cx="191.4" cy="570.4" r="4.6" fill="#e48cd0"/><circle cx="322.4" cy="512.3" r="4.6" fill="#e48cd0"/><circle cx="381.4" cy="505.1" r="4.6" fill="#e48cd0"/><circle cx="523.3" cy="500.2" r="4.6" fill="#e48cd0"/><circle cx="582.5" cy="500.2" r="4.6" fill="#e48cd0"/><circle cx="423.5" cy="550.2" r="4.6" fill="#ff7a7a"/><circle cx="481.5" cy="601.9" r="4.6" fill="#ff7a7a"/><circle cx="565.4" cy="573.2" r="4.6" fill="#ff7a7a"/><circle cx="195.7" cy="526.3" r="4.3" fill="none" stroke="#ff7a7a" stroke-width="1.1"/><circle cx="193.5" cy="544.2" r="4.3" fill="none" stroke="#ff7a7a" stroke-width="1.1"/><circle cx="417.5" cy="570.5" r="4.3" fill="none" stroke="#ff7a7a" stroke-width="1.1"/><circle cx="441.6" cy="602.0" r="4.3" fill="none" stroke="#ff7a7a" stroke-width="1.1"/><polygon points="214.9,680.5 221.8,674.1 221.8,686.9" fill="#ff5e5e"/><polygon points="286.2,680.5 279.3,674.1 279.3,686.9" fill="#ff5e5e"/><polygon points="390.9,608.0 397.8,601.6 397.8,614.4" fill="#ff5e5e"/><polygon points="428.5,608.0 421.6,601.6 421.6,614.4" fill="#ff5e5e"/><polygon points="495.3,608.3 502.2,601.9 502.2,614.7" fill="#ff5e5e"/><polygon points="530.1,608.3 523.2,601.9 523.2,614.7" fill="#ff5e5e"/><polygon points="427.0,505.4 420.6,499.8 433.4,499.8" fill="#ff5e5e"/><path d="M191.3 514.1L200.9 523.7M191.3 523.7L200.9 514.1" stroke="#a41ccc" stroke-width="1.4"/><path d="M189.2 526.3L198.8 535.9M189.2 535.9L198.8 526.3" stroke="#a41ccc" stroke-width="1.4"/><path d="M186.2 553.2L195.8 562.8M186.2 562.8L195.8 553.2" stroke="#a41ccc" stroke-width="1.4"/><path d="M186.8 647.7L196.4 657.3M186.8 657.3L196.4 647.7" stroke="#a41ccc" stroke-width="1.4"/><path d="M317.6 642.2L327.2 651.8M317.6 651.8L327.2 642.2" stroke="#a41ccc" stroke-width="1.4"/><path d="M317.0 455.8L326.6 465.4M317.0 465.4L326.6 455.8" stroke="#a41ccc" stroke-width="1.4"/><path d="M375.8 448.4L385.4 458.0M375.8 458.0L385.4 448.4" stroke="#a41ccc" stroke-width="1.4"/><path d="M375.9 538.0L385.5 547.6M375.9 547.6L385.5 538.0" stroke="#a41ccc" stroke-width="1.4"/><path d="M408.7 574.8L418.3 584.4M408.7 584.4L418.3 574.8" stroke="#a41ccc" stroke-width="1.4"/><path d="M416.2 557.0L425.8 566.6M416.2 566.6L425.8 557.0" stroke="#a41ccc" stroke-width="1.4"/><path d="M421.9 523.1L431.5 532.7M421.9 532.7L431.5 523.1" stroke="#a41ccc" stroke-width="1.4"/><path d="M485.9 549.0L495.5 558.6M485.9 558.6L495.5 549.0" stroke="#a41ccc" stroke-width="1.4"/><path d="M518.2 549.0L527.8 558.6M518.2 558.6L527.8 549.0" stroke="#a41ccc" stroke-width="1.4"/><path d="M518.5 451.9L528.1 461.5M518.5 461.5L528.1 451.9" stroke="#a41ccc" stroke-width="1.4"/><path d="M577.4 451.9L587.0 461.5M577.4 461.5L587.0 451.9" stroke="#a41ccc" stroke-width="1.4"/><path d="M577.6 532.6L587.2 542.2M577.6 542.2L587.2 532.6" stroke="#a41ccc" stroke-width="1.4"/><path d="M542.2 603.5L551.8 613.1M542.2 613.1L551.8 603.5" stroke="#a41ccc" stroke-width="1.4"/><path d="M489.0 603.5L498.6 613.1M489.0 613.1L498.6 603.5" stroke="#a41ccc" stroke-width="1.4"/><path d="M463.4 589.9L473.0 599.5M463.4 599.5L473.0 589.9" stroke="#a41ccc" stroke-width="1.4"/><path d="M445.6 590.6L455.2 600.2M445.6 600.2L455.2 590.6" stroke="#a41ccc" stroke-width="1.4"/><path d="M426.2 603.0L435.8 612.6M426.2 612.6L435.8 603.0" stroke="#a41ccc" stroke-width="1.4"/><path d="M381.2 603.0L390.8 612.6M381.2 612.6L390.8 603.0" stroke="#a41ccc" stroke-width="1.4"/><path d="M343.0 675.7L352.6 685.3M343.0 685.3L352.6 675.7" stroke="#a41ccc" stroke-width="1.4"/><path d="M127.6 675.7L137.2 685.3M127.6 685.3L137.2 675.7" stroke="#a41ccc" stroke-width="1.4"/><path d="M127.2 538.1L136.8 547.7M127.2 547.7L136.8 538.1" stroke="#a41ccc" stroke-width="1.4"/><line x1="138.6" y1="518.5" x2="132.0" y2="542.9" stroke="#ff00ff" stroke-width="1.1"/><line x1="132.0" y1="542.9" x2="132.5" y2="570.5" stroke="#008898" stroke-width="1.1"/><line x1="132.5" y1="570.5" x2="132.4" y2="680.5" stroke="#ff00ff" stroke-width="1.1"/><line x1="132.4" y1="680.5" x2="218.5" y2="680.5" stroke="#008898" stroke-width="1.1"/><line x1="282.6" y1="680.5" x2="347.8" y2="680.5" stroke="#ff00ff" stroke-width="1.1"/><line x1="347.8" y1="680.5" x2="371.4" y2="601.6" stroke="#008898" stroke-width="1.1"/><line x1="371.4" y1="601.6" x2="386.0" y2="607.8" stroke="#ff00ff" stroke-width="1.1"/><line x1="386.0" y1="607.8" x2="394.5" y2="608.0" stroke="#008898" stroke-width="1.1"/><line x1="424.9" y1="608.0" x2="431.0" y2="607.8" stroke="#ff00ff" stroke-width="1.1"/><line x1="431.0" y1="607.8" x2="450.4" y2="595.4" stroke="#008898" stroke-width="1.1"/><line x1="450.4" y1="595.4" x2="460.4" y2="586.6" stroke="#008898" stroke-width="1.1"/><line x1="460.4" y1="586.6" x2="468.2" y2="594.7" stroke="#ff00ff" stroke-width="1.1"/><line x1="468.2" y1="594.7" x2="481.5" y2="601.9" stroke="#008898" stroke-width="1.1"/><line x1="481.5" y1="601.9" x2="493.8" y2="608.3" stroke="#ff00ff" stroke-width="1.1"/><line x1="493.8" y1="608.3" x2="498.9" y2="608.3" stroke="#008898" stroke-width="1.1"/><line x1="526.5" y1="608.3" x2="547.0" y2="608.3" stroke="#ff00ff" stroke-width="1.1"/><line x1="547.0" y1="608.3" x2="565.4" y2="573.2" stroke="#008898" stroke-width="1.1"/><line x1="565.4" y1="573.2" x2="582.4" y2="537.4" stroke="#ff00ff" stroke-width="1.1"/><line x1="582.4" y1="537.4" x2="582.5" y2="500.2" stroke="#008898" stroke-width="1.1"/><line x1="582.5" y1="500.2" x2="582.2" y2="456.7" stroke="#ff00ff" stroke-width="1.1"/><line x1="582.2" y1="456.7" x2="577.3" y2="409.5" stroke="#008898" stroke-width="1.1"/><line x1="518.3" y1="409.5" x2="523.3" y2="456.7" stroke="#ff00ff" stroke-width="1.1"/><line x1="523.3" y1="456.7" x2="523.3" y2="500.2" stroke="#008898" stroke-width="1.1"/><line x1="523.3" y1="500.2" x2="523.0" y2="553.8" stroke="#ff00ff" stroke-width="1.1"/><line x1="523.0" y1="553.8" x2="509.5" y2="585.7" stroke="#008898" stroke-width="1.1"/><line x1="509.5" y1="585.7" x2="490.7" y2="553.8" stroke="#ff00ff" stroke-width="1.1"/><line x1="490.7" y1="553.8" x2="486.5" y2="501.3" stroke="#008898" stroke-width="1.1"/><line x1="427.0" y1="502.4" x2="426.7" y2="527.9" stroke="#ff00ff" stroke-width="1.1"/><line x1="426.7" y1="527.9" x2="423.5" y2="550.2" stroke="#008898" stroke-width="1.1"/><line x1="423.5" y1="550.2" x2="421.0" y2="561.8" stroke="#ff00ff" stroke-width="1.1"/><line x1="421.0" y1="561.8" x2="413.5" y2="579.6" stroke="#008898" stroke-width="1.1"/><line x1="413.5" y1="579.6" x2="409.3" y2="588.6" stroke="#008898" stroke-width="1.1"/><line x1="409.3" y1="588.6" x2="380.7" y2="542.8" stroke="#ff00ff" stroke-width="1.1"/><line x1="380.7" y1="542.8" x2="381.4" y2="505.1" stroke="#008898" stroke-width="1.1"/><line x1="381.4" y1="505.1" x2="380.6" y2="453.2" stroke="#ff00ff" stroke-width="1.1"/><line x1="380.6" y1="453.2" x2="372.4" y2="409.5" stroke="#008898" stroke-width="1.1"/><line x1="313.5" y1="409.5" x2="321.8" y2="460.6" stroke="#ff00ff" stroke-width="1.1"/><line x1="321.8" y1="460.6" x2="322.4" y2="512.3" stroke="#008898" stroke-width="1.1"/><line x1="322.4" y1="512.3" x2="322.4" y2="647.0" stroke="#ff00ff" stroke-width="1.1"/><line x1="322.4" y1="647.0" x2="249.3" y2="672.6" stroke="#008898" stroke-width="1.1"/><line x1="249.3" y1="672.6" x2="191.6" y2="652.5" stroke="#ff00ff" stroke-width="1.1"/><line x1="191.6" y1="652.5" x2="191.4" y2="570.4" stroke="#008898" stroke-width="1.1"/><line x1="191.4" y1="570.4" x2="191.0" y2="558.0" stroke="#ff00ff" stroke-width="1.1"/><line x1="191.0" y1="558.0" x2="194.0" y2="531.1" stroke="#008898" stroke-width="1.1"/><line x1="194.0" y1="531.1" x2="196.1" y2="518.9" stroke="#008898" stroke-width="1.1"/><line x1="196.1" y1="518.9" x2="196.5" y2="518.3" stroke="#008898" stroke-width="1.1"/><path d="M138.6 518.5 L196.5 518.3 Q196.1 518.9 195.7 526.3 Q194.0 531.1 193.5 544.2 Q191.0 558.0 191.4 570.4 Q191.6 652.5 249.3 672.6 Q322.4 647.0 322.4 512.3 Q321.8 460.6 313.5 409.5 L372.4 409.5 Q380.6 453.2 381.4 505.1 Q380.7 542.8 409.3 588.6 Q413.5 579.6 417.5 570.5 Q421.0 561.8 423.5 550.2 Q426.7 527.9 427.0 502.4 L424.2 409.5 L482.3 409.5 L486.5 501.3 Q490.7 553.8 509.5 585.7 Q523.0 553.8 523.3 500.2 Q523.3 456.7 518.3 409.5 L577.3 409.5 Q582.2 456.7 582.5 500.2 Q582.4 537.4 565.4 573.2 Q547.0 608.3 526.5 608.3 L498.9 608.3 Q493.8 608.3 481.5 601.9 Q468.2 594.7 460.4 586.6 Q450.4 595.4 441.6 602.0 Q431.0 607.8 424.9 608.0 L394.5 608.0 Q386.0 607.8 371.4 601.6 Q347.8 680.5 282.6 680.5 L218.5 680.5 Q132.4 680.5 132.5 570.5 Q132.0 542.9 138.6 518.5 Z" fill="none" stroke="#000" stroke-width="1.1"/><polygon points="450.4,261.5 483.7,292.4 450.4,325.2 417.5,294.0" fill="none" stroke="#1a1a1a" stroke-width="1.1"/><polygon points="415.4,316.2 448.3,347.5 415.4,380.0 383.2,349.0" fill="none" stroke="#1a1a1a" stroke-width="1.1"/><polygon points="482.5,316.2 515.6,347.0 482.5,380.0 448.5,347.5" fill="none" stroke="#1a1a1a" stroke-width="1.1"/><rect x="447.1" y="257.5" width="6.5" height="6.5" fill="none" stroke="#c8c800" stroke-width="2"/><rect x="480.4" y="288.4" width="6.5" height="6.5" fill="none" stroke="#c8c800" stroke-width="2"/><rect x="447.1" y="321.2" width="6.5" height="6.5" fill="none" stroke="#c8c800" stroke-width="2"/><rect x="414.2" y="290.0" width="6.5" height="6.5" fill="none" stroke="#c8c800" stroke-width="2"/><rect x="412.1" y="312.2" width="6.5" height="6.5" fill="none" stroke="#c8c800" stroke-width="2"/><rect x="445.1" y="343.5" width="6.5" height="6.5" fill="none" stroke="#c8c800" stroke-width="2"/><rect x="412.1" y="376.0" width="6.5" height="6.5" fill="none" stroke="#c8c800" stroke-width="2"/><rect x="379.9" y="345.0" width="6.5" height="6.5" fill="none" stroke="#c8c800" stroke-width="2"/><rect x="479.2" y="312.2" width="6.5" height="6.5" fill="none" stroke="#c8c800" stroke-width="2"/><rect x="512.4" y="343.0" width="6.5" height="6.5" fill="none" stroke="#c8c800" stroke-width="2"/><rect x="479.2" y="376.0" width="6.5" height="6.5" fill="none" stroke="#c8c800" stroke-width="2"/><rect x="445.2" y="343.5" width="6.5" height="6.5" fill="none" stroke="#c8c800" stroke-width="2"/><path d="M441.3 322.5L445.3 326.5M441.3 325.5L441.3 322.5L444.3 322.5" stroke="#808030" stroke-width="1.1" fill="none"/><path d="M406.5 377.5L410.5 381.5M406.5 380.5L406.5 377.5L409.5 377.5" stroke="#808030" stroke-width="1.1" fill="none"/><path d="M473.5 377.5L477.5 381.5M473.5 380.5L473.5 377.5L476.5 377.5" stroke="#808030" stroke-width="1.1" fill="none"/><path d="M423.5 212.2 L425.0 218.7 L431.8 220.2 L425.0 221.7 L423.5 227.2 L422.0 221.7 L415.2 220.2 L422.0 218.7 Z" fill="#0c3cff"/><path d="M451.4 644.6 L452.9 651.1 L459.7 652.6 L452.9 654.1 L451.4 659.6 L449.9 654.1 L443.1 652.6 L449.9 651.1 Z" fill="#0c3cff"/></svg>
<svg class="a" style="left:0;top:0;overflow:visible" width="684" height="848"><text x="382.30" y="239.80" font-size="12.14" textLength="81.48" lengthAdjust="spacingAndGlyphs" fill="#1444ff" font-family="'Liberation Sans',sans-serif" style="white-space:pre" >ArabicAbove</text></svg>
<svg class="a" style="left:0;top:0;overflow:visible" width="684" height="848"><text x="410.90" y="672.20" font-size="12.14" textLength="77.68" lengthAdjust="spacingAndGlyphs" fill="#1444ff" font-family="'Liberation Sans',sans-serif" style="white-space:pre" >ArabicBelow</text></svg>
<div class="a" style="left:239px;top:651px;width:289px;height:19px;background:#bfd3ea"></div>
<svg class="a" style="left:0;top:0;overflow:visible" width="684" height="848"><text x="241.73" y="664.00" font-size="11.03" textLength="283.75" lengthAdjust="spacingAndGlyphs" fill="#202020" font-family="'Liberation Sans',sans-serif" style="white-space:pre" >1588 0x634 U+0634 &quot;sheen&quot; ARABIC LETTER SHEEN</text></svg>
<div class="a" style="left:18.5px;top:111px;width:55.5px;height:323px;background:#edeceb;border:2px solid #111;border-radius:4px 0 0 0"></div><svg class="a" style="left:0;top:0" width="684" height="848"><rect x="20.5" y="113.0" width="25.5" height="26" fill="#edeceb"/><path d="M21.5 138.5H45.4V113.5" stroke="#f8f8f8" stroke-width="1.2" fill="none"/><path d="M21.3 138.0V113.8H45.0" stroke="#d6d6d4" stroke-width="1" fill="none"/><g transform="translate(20.5 113.0)"><defs><linearGradient id="pg" x1="0" y1="0" x2="1" y2="1"><stop offset="0" stop-color="#ffffff"/><stop offset="1" stop-color="#d0d0d0"/></linearGradient></defs><path d="M8 2.7 L8 19.5 L12.9 16.3 L14.6 23.2 L18.1 22.2 L16.2 15.4 L20.4 14.6 Z" fill="url(#pg)" stroke="#4c4c4c" stroke-width="1.2" stroke-linejoin="round"/></g><rect x="46.5" y="113.0" width="26.0" height="26" fill="#edeceb"/><path d="M47.5 138.5H71.9V113.5" stroke="#777" stroke-width="1.2" fill="none"/><path d="M47.0 138.0V113.5H71.5" stroke="#fafafa" stroke-width="1" fill="none"/><g transform="translate(46.5 113.0)"><line x1="15.5" y1="16" x2="21.3" y2="22" stroke="#6e6e6e" stroke-width="3.2" stroke-linecap="round"/><line x1="15.5" y1="16" x2="21.3" y2="22" stroke="#b8b8b8" stroke-width="1" stroke-linecap="round"/><circle cx="10.3" cy="10.4" r="7" fill="#b3cdee" stroke="#8a8a8a" stroke-width="1.5"/><circle cx="10.3" cy="10.4" r="5.8" fill="none" stroke="#eef4fb" stroke-width="0.9"/><path d="M4 10.5 H16.5" stroke="#c6daf2" stroke-width="0.8"/></g><rect x="20.5" y="140.0" width="25.5" height="26" fill="#edeceb"/><path d="M21.5 165.5H45.4V140.5" stroke="#777" stroke-width="1.2" fill="none"/><path d="M21.0 165.0V140.5H45.0" stroke="#fafafa" stroke-width="1" fill="none"/><g transform="translate(20.5 140.0)"><path d="M3.5 22.5 C1 20 7 16 5 11 C3.5 7 1 6 3 4.5 C6 2 12 3 14.2 5.8" stroke="#5a5a5a" stroke-width="3.4" fill="none" stroke-linecap="round"/><path d="M3.5 22.5 C1 20 7 16 5 11 C3.5 7 1 6 3 4.5 C6 2 12 3 14.2 5.8" stroke="#f6f6f6" stroke-width="1.6" fill="none" stroke-linecap="round"/><defs><linearGradient id="og" x1="0" y1="0" x2="1" y2="0"><stop offset="0" stop-color="#f8c030"/><stop offset="1" stop-color="#e88400"/></linearGradient></defs><path d="M9.8 25 V12.3 L14 5.6 L18.3 12.3 V25 Z" fill="url(#og)" stroke="#7a5010" stroke-width="0.9"/><path d="M9.8 12.3 L14 5.6 L18.3 12.3 Z" fill="#efd6a8" stroke="#7a5010" stroke-width="0.8"/><path d="M12.7 7.7 L14 5.6 L15.3 7.7 Z" fill="#333"/><path d="M17.4 20.2 L23.3 20.2 L20.3 23.5 Z" fill="#4cb01c"/></g><rect x="46.5" y="140.0" width="26.0" height="26" fill="#edeceb"/><path d="M47.5 165.5H71.9V140.5" stroke="#777" stroke-width="1.2" fill="none"/><path d="M47.0 165.0V140.5H71.5" stroke="#fafafa" stroke-width="1" fill="none"/><g transform="translate(46.5 140.0)"><path d="M8 24 C5 20 3 16 4.5 12.5 L6 9 V5 C6 3.5 8.5 3.5 8.5 5 V10 V3.5 C8.5 2 11 2 11 3.5 V10 V3 C11 1.5 13.5 1.5 13.5 3 V10 V4.5 C13.5 3 16 3 16 4.5 V13 L19 10.5 C20.5 9.5 22 11 21 12.5 L16.5 20 C15 23 12 24 8 24 Z" fill="#dfe0dc" stroke="#808080" stroke-width="1"/></g><rect x="20.5" y="167.0" width="25.5" height="26" fill="#edeceb"/><path d="M21.5 192.5H45.4V167.5" stroke="#777" stroke-width="1.2" fill="none"/><path d="M21.0 192.0V167.5H45.0" stroke="#fafafa" stroke-width="1" fill="none"/><g transform="translate(20.5 167.0)"><path d="M10.9 10.8 L17.4 3.6 L22.3 7.7 L15 16 Z" fill="#f2f5ee"/><path d="M10.9 10.8 L17.4 3.6 M15 16 L22.3 7.7" stroke="#5a5a5a" stroke-width="1.2" fill="none"/><path d="M2.2 22.6 L10.9 10.8 Q12 13.5 14.8 15.2 L15.8 18.4 Q9 21.3 2.2 22.6 Z" fill="#d6dad2" stroke="#555" stroke-width="1.1" stroke-linejoin="round"/><path d="M5 20.8 L11.5 14.5" stroke="#f8f8f8" stroke-width="1" /></g><rect x="46.5" y="167.0" width="26.0" height="26" fill="#edeceb"/><path d="M47.5 192.5H71.9V167.5" stroke="#777" stroke-width="1.2" fill="none"/><path d="M47.0 192.0V167.5H71.5" stroke="#fafafa" stroke-width="1" fill="none"/><g transform="translate(46.5 167.0)"><rect x="2.9" y="8.2" width="21" height="9.3" fill="#d3d5cf" stroke="#8a8a8a" stroke-width="1"/><rect x="4" y="9.2" width="18.8" height="2" fill="#e6e8e2"/><path d="M5 17.5V13.5M7 17.5V14.8M9 17.5V13.5M11 17.5V14.8M13 17.5V13.5M15 17.5V14.8M17 17.5V13.5M19 17.5V14.8M21 17.5V13.5" stroke="#555" stroke-width="0.8"/></g><rect x="20.5" y="194.0" width="25.5" height="26" fill="#edeceb"/><path d="M21.5 219.5H45.4V194.5" stroke="#777" stroke-width="1.2" fill="none"/><path d="M21.0 219.0V194.5H45.0" stroke="#fafafa" stroke-width="1" fill="none"/><g transform="translate(20.5 194.0)"><path d="M0.8 17.8 L9.8 10.6 M1.2 20 L10.2 12.8" stroke="#666" stroke-width="0.9" stroke-dasharray="1.2 0.6" fill="none"/><rect x="5.7" y="3.4" width="2.8" height="15" rx="1" fill="#f4f4f4" stroke="#555" stroke-width="0.9"/><circle cx="7.1" cy="10.8" r="2" fill="#fff" stroke="#555" stroke-width="0.8"/><path d="M8 10.5 C10 5.5 13.5 3.6 15.5 3.9 C17 4.2 18.1 5.5 18.1 7.4 V12" stroke="#555" stroke-width="2.2" fill="none"/><path d="M8 10.5 C10 5.5 13.5 3.6 15.5 3.9 C17 4.2 18.1 5.5 18.1 7.4 V12" stroke="#f2f2f2" stroke-width="0.9" fill="none"/><rect x="15.3" y="11.9" width="5.3" height="2.8" fill="#f0d010"/><path d="M13.6 17 C13.6 15.6 14.4 15 15.5 15 H20.4 C21.5 15 22.3 15.6 22.3 17 V23.7 H13.6 Z" fill="#3668b8" stroke="#234f96" stroke-width="0.8"/><rect x="15" y="16.3" width="5.9" height="6.4" fill="none" stroke="#6a9ad8" stroke-width="0.7"/></g><rect x="46.5" y="194.0" width="26.0" height="26" fill="#edeceb"/><path d="M47.8 219.0V195.5H71.5" stroke="#6a6a6a" stroke-width="1.2" fill="none"/><path d="M49.0 218.0V196.7H70.5" stroke="#fbfbfb" stroke-width="1" fill="none"/><path d="M47.5 219.5H71.9V195.5" stroke="#777" stroke-width="1.2" fill="none"/><path d="M70.7 218.5V196.5" stroke="#f6f6f6" stroke-width="1" fill="none"/><g transform="translate(46.5 194.0)"><path d="M8.7 16 C5 13 5.5 5.8 11.5 5.8 C15 5.8 16.2 8 16.2 11 V15.5 C16.2 18.5 17 19.8 18.7 19.8 C20.7 19.8 21.5 17 21.3 14.5" stroke="#4e4e4e" stroke-width="4.2" fill="none"/><path d="M8.7 16 C5 13 5.5 5.8 11.5 5.8 C15 5.8 16.2 8 16.2 11 V15.5 C16.2 18.5 17 19.8 18.7 19.8 C20.7 19.8 21.5 17 21.3 14.5" stroke="#d8d8d6" stroke-width="2" fill="none"/><rect x="6.4" y="14.3" width="4.6" height="4.6" fill="#f6f6f6" stroke="#6a6a6a" stroke-width="0.9"/><rect x="18.8" y="11" width="4.6" height="4.6" fill="#f6f6f6" stroke="#6a6a6a" stroke-width="0.9"/></g><rect x="20.5" y="221.0" width="25.5" height="26" fill="#edeceb"/><path d="M21.5 246.5H45.4V221.5" stroke="#777" stroke-width="1.2" fill="none"/><path d="M21.0 246.0V221.5H45.0" stroke="#fafafa" stroke-width="1" fill="none"/><g transform="translate(20.5 221.0)"><path d="M9.5 1.5 C12 4 13 8 13 12 C13 16 12 20 11.5 24.5" stroke="#000" stroke-width="1.1" fill="none"/><path d="M13 8.3 L16.5 12 L13 15.7 L9.5 12 Z" fill="#f00"/></g><rect x="46.5" y="221.0" width="26.0" height="26" fill="#edeceb"/><path d="M47.5 246.5H71.9V221.5" stroke="#777" stroke-width="1.2" fill="none"/><path d="M47.0 246.0V221.5H71.5" stroke="#fafafa" stroke-width="1" fill="none"/><g transform="translate(46.5 221.0)"><path d="M1.5 9.5 C4 13 9 13 13.5 12 M13.5 12 C18 13 22 13 24.5 9.5" stroke="#000" stroke-width="0.7" fill="none"/><path d="M10 1.5 C12.5 4 13.5 8 13.5 12 C13.5 16 12.5 20 12 24.5" stroke="#000" stroke-width="1.1" fill="none"/><path d="M13.5 8.3 L17 12 L13.5 15.7 L10 12 Z" fill="#f00"/></g><rect x="20.5" y="248.0" width="25.5" height="26" fill="#edeceb"/><path d="M21.5 273.5H45.4V248.5" stroke="#777" stroke-width="1.2" fill="none"/><path d="M21.0 273.0V248.5H45.0" stroke="#fafafa" stroke-width="1" fill="none"/><g transform="translate(20.5 248.0)"><path d="M1 1 L13 13 V24.5" stroke="#000" stroke-width="1.1" fill="none"/><rect x="10.5" y="10.5" width="5" height="5" fill="#f00"/></g><rect x="46.5" y="248.0" width="26.0" height="26" fill="#edeceb"/><path d="M47.5 273.5H71.9V248.5" stroke="#777" stroke-width="1.2" fill="none"/><path d="M47.0 273.0V248.5H71.5" stroke="#fafafa" stroke-width="1" fill="none"/><g transform="translate(46.5 248.0)"><path d="M10 1 C12.5 3 13.5 6 13.5 10 V24.5" stroke="#000" stroke-width="1.1" fill="none"/><path d="M13.5 9 L18 13.5 H9 Z" fill="#f00"/></g><rect x="20.5" y="275.0" width="25.5" height="26" fill="#edeceb"/><path d="M21.5 300.5H45.4V275.5" stroke="#777" stroke-width="1.2" fill="none"/><path d="M21.0 300.0V275.5H45.0" stroke="#fafafa" stroke-width="1" fill="none"/><g transform="translate(20.5 275.0)"><rect x="2.8" y="2.5" width="9.5" height="9" fill="#d4d6d0" stroke="#888" stroke-width="1"/><rect x="6.3" y="8.2" width="16" height="13.8" fill="#d4d6d0" stroke="#888" stroke-width="1"/><rect x="7.8" y="9.7" width="13" height="10.8" fill="none" stroke="#f4f4f4" stroke-width="0.8"/><path d="M8 11 L10.8 8.2 L13.3 10.7 L14.8 9.2 L15.4 16.2 L8.4 15.6 L9.9 14.1 Z" fill="#e01818" stroke="#b00" stroke-width="0.5"/></g><rect x="46.5" y="275.0" width="26.0" height="26" fill="#edeceb"/><path d="M47.5 300.5H71.9V275.5" stroke="#777" stroke-width="1.2" fill="none"/><path d="M47.0 300.0V275.5H71.5" stroke="#fafafa" stroke-width="1" fill="none"/><g transform="translate(46.5 275.0)"><rect x="2.5" y="3" width="11" height="9" fill="#d4d6d0" stroke="#888" stroke-width="1"/><rect x="9" y="9" width="10" height="12" fill="#d4d6d0" stroke="#888" stroke-width="1" transform="rotate(-45 14 15)"/><path d="M16 2 C20 1 23 4 21 7 L23 8 L19 11 L17 6 L19 6.5 C19.5 5 18 4 16 5 Z" fill="#e01818"/><path d="M11 24 C7 25 3 22 5 19 L3 18 L7 15 L9 20 L7 19.5 C6.5 21 8 22 10 21 Z" fill="#e01818"/></g><rect x="20.5" y="302.0" width="25.5" height="26" fill="#edeceb"/><path d="M21.5 327.5H45.4V302.5" stroke="#777" stroke-width="1.2" fill="none"/><path d="M21.0 327.0V302.5H45.0" stroke="#fafafa" stroke-width="1" fill="none"/><g transform="translate(20.5 302.0)"><path d="M3 23 L10.5 4 V23 Z" fill="#fafafa" stroke="#777" stroke-width="1"/><path d="M13 4 V23" stroke="#f08020" stroke-width="1.2" stroke-dasharray="2 1.5"/><path d="M15.5 23 V4 L23 23 Z" fill="#a8c6ea" stroke="#2c58a0" stroke-width="1"/></g><rect x="46.5" y="302.0" width="26.0" height="26" fill="#edeceb"/><path d="M47.5 327.5H71.9V302.5" stroke="#777" stroke-width="1.2" fill="none"/><path d="M47.0 327.0V302.5H71.5" stroke="#fafafa" stroke-width="1" fill="none"/><g transform="translate(46.5 302.0)"><rect x="2.5" y="3" width="15" height="16" fill="#f2f2f0" stroke="#888" stroke-width="1"/><path d="M2.5 3 H17 L23 19 H8 Z" fill="#dadcd6" stroke="#aaa" stroke-width="0.8" opacity="0.8"/><path d="M5 19 H11 V16 L16 20.5 L11 25 V22 H5 Z" fill="#e01818"/></g><rect x="20.5" y="329.0" width="25.5" height="26" fill="#edeceb"/><path d="M21.5 354.5H45.4V329.5" stroke="#777" stroke-width="1.2" fill="none"/><path d="M21.0 354.0V329.5H45.0" stroke="#fafafa" stroke-width="1" fill="none"/><g transform="translate(20.5 329.0)"><defs><linearGradient id="cg" x1="0" y1="0" x2="0.3" y2="1"><stop offset="0" stop-color="#fafafa"/><stop offset="1" stop-color="#c8c8c6"/></linearGradient></defs><path d="M3.5 8 L12 3.5 L20.5 8 V17 L12 21.5 L3.5 17 Z" fill="url(#cg)" stroke="#6a6a6a" stroke-width="1"/><path d="M3.5 8 L12 12.3 L20.5 8 M12 12.3 V21.5" stroke="#6a6a6a" stroke-width="0.9" fill="none"/><path d="M18.5 8.5 C23.5 11 24 19.5 20 20.5 C17 21.5 14.5 19 15.5 15.5" stroke="#d81818" stroke-width="1.3" stroke-dasharray="1.5 1.1" fill="none"/><path d="M15.5 6.5 L21 5.5 L19.3 11 Z" fill="#c80000"/></g><rect x="46.5" y="329.0" width="26.0" height="26" fill="#edeceb"/><path d="M47.5 354.5H71.9V329.5" stroke="#777" stroke-width="1.2" fill="none"/><path d="M47.0 354.0V329.5H71.5" stroke="#fafafa" stroke-width="1" fill="none"/><g transform="translate(46.5 329.0)"><defs><linearGradient id="sg" x1="0" y1="0" x2="0" y2="1"><stop offset="0" stop-color="#9a9a9a"/><stop offset="0.3" stop-color="#ffffff"/><stop offset="1" stop-color="#c4c4c2"/></linearGradient></defs><path d="M0.5 13 L12.5 1.5 L25 13" stroke="#70c040" stroke-width="1.3" stroke-dasharray="1.4 1.8" fill="none"/><path d="M4.5 23 V11 C4.5 8.5 6 7.5 8 7.5 H17.5 C19.5 7.5 21 8.5 21 11 V23 Z" fill="url(#sg)" stroke="#505050" stroke-width="1.1"/></g><rect x="20.5" y="356.0" width="25.5" height="26" fill="#edeceb"/><path d="M21.5 381.5H45.4V356.5" stroke="#777" stroke-width="1.2" fill="none"/><path d="M21.0 381.0V356.5H45.0" stroke="#fafafa" stroke-width="1" fill="none"/><g transform="translate(20.5 356.0)"><defs><linearGradient id="rg" x1="0" y1="0" x2="1" y2="1"><stop offset="0" stop-color="#ffffff"/><stop offset="1" stop-color="#c0c0be"/></linearGradient></defs><rect x="4.5" y="5.5" width="17" height="14" fill="url(#rg)" stroke="#555" stroke-width="1.1"/><rect x="5.8" y="6.8" width="14.4" height="11.4" fill="none" stroke="#fff" stroke-width="0.8"/><path d="M17.5 20.2 H24 L20.75 23.5 Z" fill="#4cb01c"/></g><rect x="46.5" y="356.0" width="26.0" height="26" fill="#edeceb"/><path d="M47.5 381.5H71.9V356.5" stroke="#777" stroke-width="1.2" fill="none"/><path d="M47.0 381.0V356.5H71.5" stroke="#fafafa" stroke-width="1" fill="none"/><g transform="translate(46.5 356.0)"><defs><linearGradient id="ng" x1="0" y1="0" x2="0.4" y2="1"><stop offset="0" stop-color="#fafafa"/><stop offset="1" stop-color="#b8b8b6"/></linearGradient></defs><path d="M12.5 4 L21.5 10.5 L18.5 21 H7 L4 10.5 Z" fill="url(#ng)" stroke="#555" stroke-width="1"/><path d="M18.5 20.2 H25 L21.75 23.5 Z" fill="#4cb01c"/></g><path d="M21 112.5 H72" stroke="#111" stroke-width="0"/></svg><svg class="a" style="left:0;top:0" width="684" height="848"><text x="22.09" y="392.70" font-size="10.76" textLength="28.45" lengthAdjust="spacingAndGlyphs" fill="#111" font-family="Liberation Mono">Mse1</text></svg><svg class="a" style="left:0;top:0" width="684" height="848"><text x="22.19" y="404.10" font-size="10.76" textLength="37.48" lengthAdjust="spacingAndGlyphs" fill="#111" font-family="Liberation Mono">^Mse1</text></svg><svg class="a" style="left:0;top:0" width="684" height="848"><text x="22.08" y="416.30" font-size="11.36" textLength="28.76" lengthAdjust="spacingAndGlyphs" fill="#111" font-family="Liberation Mono">Mse2</text></svg><svg class="a" style="left:0;top:0" width="684" height="848"><text x="22.18" y="427.80" font-size="11.36" textLength="37.81" lengthAdjust="spacingAndGlyphs" fill="#111" font-family="Liberation Mono">^Mse2</text></svg><svg class="a" style="left:0;top:0" width="684" height="848"><defs><linearGradient id="ag" x1="0" y1="0" x2="1" y2="1"><stop offset="0" stop-color="#ffffff"/><stop offset="1" stop-color="#cfcfcf"/></linearGradient></defs><path d="M57.8 384.5 L70.3 390.2 L66.3 391.8 L70.6 395.8 L68.6 397.8 L64.4 393.6 L62.2 397.3 Z" fill="url(#ag)" stroke="#555" stroke-width="0.9" stroke-linejoin="round"/><path d="M57.8 396.3 L70.3 402 L66.3 403.6 L70.6 407.6 L68.6 409.6 L64.4 405.4 L62.2 409.1 Z" fill="url(#ag)" stroke="#555" stroke-width="0.9" stroke-linejoin="round"/><line x1="65.5" y1="416.5" x2="70.5" y2="421.5" stroke="#6e6e6e" stroke-width="2.6" stroke-linecap="round"/><circle cx="62.3" cy="413" r="4.8" fill="#b3cdee" stroke="#8a8a8a" stroke-width="1.2"/><circle cx="62.3" cy="413" r="3.8" fill="none" stroke="#eef4fb" stroke-width="0.7"/><rect x="56.5" y="422.5" width="15" height="8" fill="#d3d5cf" stroke="#8a8a8a" stroke-width="1"/><rect x="57.5" y="423.5" width="13" height="1.5" fill="#eef0ea"/><path d="M59 430V427M61 430V428M63 430V427M65 430V428M67 430V427M69 430V428" stroke="#555" stroke-width="0.7"/></svg>
<div class="a" style="left:19px;top:434.5px;width:91px;height:93px;background:#edeceb;border:1px solid #222"></div><div class="a" style="left:25px;top:439.9px;width:12px;height:12px;border:1.2px solid #b4b8ac;border-radius:2px;background:linear-gradient(#f4f4f2,#ffffff)"></div><svg class="a" style="left:25px;top:436.7px" width="16" height="16"><path d="M3.6 8 L6.3 12.6 L13.5 3.9" stroke="#2c66c4" stroke-width="3" fill="none" stroke-linecap="round" stroke-linejoin="round"/><path d="M4.2 8.6 L6.4 11.6 L12.8 4.6" stroke="#7aa8e6" stroke-width="1" fill="none"/></svg><svg class="a" style="left:0;top:0;overflow:visible" width="684" height="848"><text x="72.14" y="449.80" font-size="12.69" textLength="35.44" lengthAdjust="spacingAndGlyphs" fill="#202020" font-family="'Liberation Sans',sans-serif" style="white-space:pre" >Guide</text></svg><svg class="a" style="left:0;top:0;overflow:visible" width="684" height="848"><text x="58.83" y="449.80" font-size="11.97" textLength="8.29" lengthAdjust="spacingAndGlyphs" fill="#202020" font-family="'Liberation Sans',sans-serif" style="white-space:pre" >#</text></svg><div class="a" style="left:25px;top:461.8px;width:12px;height:12px;border:1.2px solid #b4b8ac;border-radius:2px;background:linear-gradient(#f4f4f2,#ffffff)"></div><svg class="a" style="left:25px;top:458.6px" width="16" height="16"><path d="M3.6 8 L6.3 12.6 L13.5 3.9" stroke="#2c66c4" stroke-width="3" fill="none" stroke-linecap="round" stroke-linejoin="round"/><path d="M4.2 8.6 L6.4 11.6 L12.8 4.6" stroke="#7aa8e6" stroke-width="1" fill="none"/></svg><svg class="a" style="left:0;top:0;overflow:visible" width="684" height="848"><text x="71.75" y="471.55" font-size="13.03" textLength="29.12" lengthAdjust="spacingAndGlyphs" fill="#202020" font-family="'Liberation Sans',sans-serif" style="white-space:pre" >Back</text></svg><svg class="a" style="left:0;top:0;overflow:visible" width="684" height="848"><text x="46.23" y="471.55" font-size="12.14" textLength="8.06" lengthAdjust="spacingAndGlyphs" fill="#202020" font-family="'Liberation Sans',sans-serif" style="white-space:pre" >Q</text></svg><svg class="a" style="left:0;top:0;overflow:visible" width="684" height="848"><text x="57.39" y="471.55" font-size="12.32" textLength="7.73" lengthAdjust="spacingAndGlyphs" fill="#202020" font-family="'Liberation Sans',sans-serif" style="white-space:pre" >F</text></svg><div class="a" style="left:25px;top:483.7px;width:12px;height:12px;border:1.2px solid #b4b8ac;border-radius:2px;background:linear-gradient(#f4f4f2,#ffffff)"></div><svg class="a" style="left:25px;top:480.5px" width="16" height="16"><path d="M3.6 8 L6.3 12.6 L13.5 3.9" stroke="#2c66c4" stroke-width="3" fill="none" stroke-linecap="round" stroke-linejoin="round"/><path d="M4.2 8.6 L6.4 11.6 L12.8 4.6" stroke="#7aa8e6" stroke-width="1" fill="none"/></svg><div class="a" style="left:70px;top:479px;width:39.5px;height:21.5px;background:#1e1e1e"></div><svg class="a" style="left:0;top:0;overflow:visible" width="684" height="848"><text x="71.75" y="493.30" font-size="13.04" textLength="26.89" lengthAdjust="spacingAndGlyphs" fill="#fff" font-family="'Liberation Sans',sans-serif" style="white-space:pre" >Fore</text></svg><svg class="a" style="left:0;top:0;overflow:visible" width="684" height="848"><text x="46.23" y="493.30" font-size="12.14" textLength="8.06" lengthAdjust="spacingAndGlyphs" fill="#202020" font-family="'Liberation Sans',sans-serif" style="white-space:pre" >Q</text></svg><svg class="a" style="left:0;top:0;overflow:visible" width="684" height="848"><text x="57.39" y="493.30" font-size="12.32" textLength="7.73" lengthAdjust="spacingAndGlyphs" fill="#202020" font-family="'Liberation Sans',sans-serif" style="white-space:pre" >F</text></svg><div class="a btn" style="left:28.5px;top:504.5px;width:14px;height:14px;border-radius:3px;border-color:#b0aeab"></div><div class="a btn" style="left:45.5px;top:504.5px;width:14px;height:14px;border-radius:3px;border-color:#b0aeab"></div><div class="a" style="left:33.5px;top:505px;font-size:10px;line-height:12px;color:#202020">-</div><svg class="a" style="left:45.5px;top:504.5px" width="14" height="14"><path d="M7 2.5V11.5M2.5 7H11.5" stroke="#202020" stroke-width="1"/></svg>
<div class="a" style="left:666px;top:96.4px;width:15.5px;height:732.6px;background:#e4e3e0"></div>
<div class="a" style="left:681px;top:96px;width:1.2px;height:750px;background:#d9d2d2"></div>
<div class="a" style="left:668.7px;top:576px;width:9.4px;height:138px;background:#9a9994;border-radius:5px"></div>
<div class="a" style="left:2px;top:829px;width:664.5px;height:15px;background:#e4e3e0"></div>
<div class="a" style="left:2px;top:844px;width:680px;height:2px;background:#d8d4d1"></div>
<div class="a" style="left:139px;top:831.7px;width:138px;height:9px;background:#9a9994;border-radius:5px"></div>
<div class="a" style="left:666.8px;top:830px;width:13.4px;height:12.8px;background:#050505"></div>
<svg class="a" style="left:0;top:0" width="684" height="848"><path d="M667.5 104.5 L673.5 98.5 L679.5 104.5 Z" fill="none" stroke="#8a8a8a" stroke-width="1"/><path d="M667.5 820.5 L673.5 826.5 L679.5 820.5 Z" fill="none" stroke="#8a8a8a" stroke-width="1"/><path d="M11.5 830.5 L5.5 836.5 L11.5 842.5 Z" fill="none" stroke="#8a8a8a" stroke-width="1"/><path d="M657.5 830.5 L663.5 836.5 L657.5 842.5 Z" fill="none" stroke="#8a8a8a" stroke-width="1"/><path d="M669.5 833 C671 831.5 673 832 673.5 833.5 M670 834.5 H675.5 M672.5 832.5 V839 C672.5 840 673.5 840.5 674.5 840 M674.5 832.5 C676 831.5 677.5 832 678 833.5 M675 834.5 H679 M676.5 833 V839 C676.5 840 677.5 840.5 679 840" stroke="#f0f0f0" stroke-width="1.1" fill="none"/><path d="M670 841.5 H678" stroke="#8c7c6c" stroke-width="1"/></svg>
<div id="frame"></div>
<svg class="a" style="left:0;top:0" width="684" height="848"><path d="M0 0 H3.5 C1.8 0.4 0.4 1.8 0 3.5 Z M684 0 H680.5 C682.2 0.4 683.6 1.8 684 3.5 Z M0 848 H2.5 C1.2 847.6 0.4 846.8 0 845.5 Z M684 848 H681.5 C682.8 847.6 683.6 846.8 684 845.5 Z" fill="#000"/></svg>
</div></body></html>
